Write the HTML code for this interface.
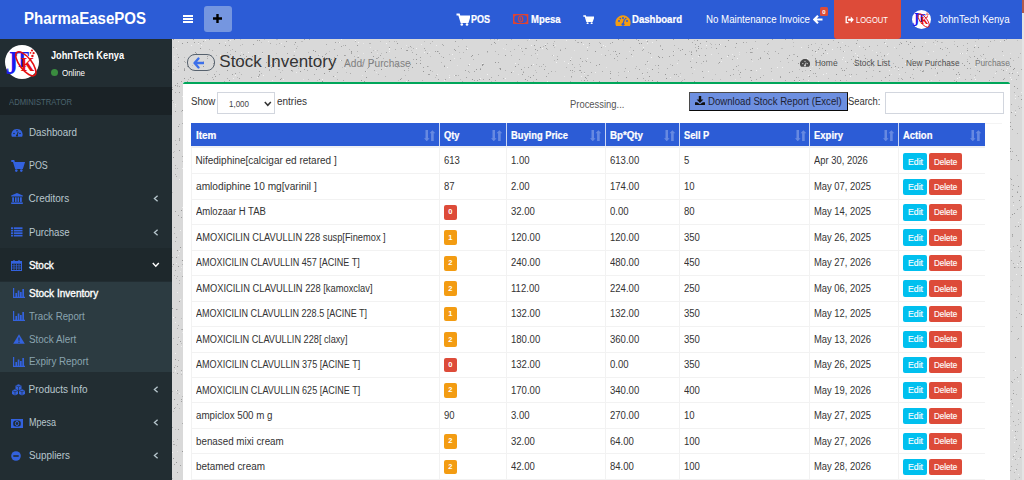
<!DOCTYPE html>
<html><head><meta charset="utf-8"><title>Stock Inventory</title>
<style>
html,body{margin:0;padding:0;width:1024px;height:480px;overflow:hidden;background:#d9d9d9;}
body{position:relative;font-family:"Liberation Sans", sans-serif;}
</style></head><body>
<div style="position:absolute;left:172px;top:38px;width:850px;height:442px;background:#d9d9d9;"></div>
<svg style="position:absolute;left:172px;top:38px;shape-rendering:crispEdges;" width="850" height="442" viewBox="0 0 850 442"><rect x="331" y="10" width="1" height="1" fill="#e8e8e8"/><rect x="666" y="4" width="1" height="1" fill="#a2a2a2"/><rect x="840" y="35" width="1" height="1" fill="#a2a2a2"/><rect x="374" y="38" width="1" height="1" fill="#a2a2a2"/><rect x="519" y="14" width="1" height="1" fill="#a2a2a2"/><rect x="88" y="28" width="1" height="1" fill="#e8e8e8"/><rect x="71" y="16" width="1" height="1" fill="#a2a2a2"/><rect x="564" y="28" width="1" height="1" fill="#a2a2a2"/><rect x="846" y="37" width="1" height="1" fill="#a2a2a2"/><rect x="228" y="41" width="1" height="1" fill="#989898"/><rect x="63" y="37" width="1" height="1" fill="#f4f4f4"/><rect x="406" y="4" width="1" height="1" fill="#acacac"/><rect x="47" y="36" width="1" height="1" fill="#acacac"/><rect x="296" y="27" width="1" height="1" fill="#acacac"/><rect x="553" y="8" width="1" height="1" fill="#989898"/><rect x="315" y="36" width="1" height="1" fill="#f4f4f4"/><rect x="185" y="7" width="1" height="1" fill="#989898"/><rect x="584" y="41" width="1" height="1" fill="#acacac"/><rect x="381" y="7" width="1" height="1" fill="#989898"/><rect x="729" y="5" width="1" height="1" fill="#989898"/><rect x="61" y="40" width="1" height="1" fill="#efefef"/><rect x="508" y="35" width="1" height="1" fill="#bebebe"/><rect x="795" y="21" width="1" height="1" fill="#bebebe"/><rect x="599" y="30" width="1" height="1" fill="#b6b6b6"/><rect x="306" y="16" width="1" height="1" fill="#acacac"/><rect x="715" y="16" width="1" height="1" fill="#efefef"/><rect x="588" y="20" width="1" height="1" fill="#989898"/><rect x="506" y="22" width="1" height="1" fill="#bebebe"/><rect x="294" y="39" width="1" height="1" fill="#a2a2a2"/><rect x="120" y="33" width="1" height="1" fill="#bebebe"/><rect x="168" y="22" width="1" height="1" fill="#efefef"/><rect x="500" y="27" width="1" height="1" fill="#a2a2a2"/><rect x="684" y="5" width="1" height="1" fill="#989898"/><rect x="586" y="21" width="1" height="1" fill="#b6b6b6"/><rect x="711" y="23" width="1" height="1" fill="#989898"/><rect x="508" y="38" width="1" height="1" fill="#e8e8e8"/><rect x="70" y="6" width="1" height="1" fill="#b6b6b6"/><rect x="485" y="43" width="1" height="1" fill="#a2a2a2"/><rect x="62" y="20" width="1" height="1" fill="#989898"/><rect x="697" y="29" width="1" height="1" fill="#b6b6b6"/><rect x="733" y="25" width="1" height="1" fill="#f4f4f4"/><rect x="355" y="2" width="1" height="1" fill="#bebebe"/><rect x="363" y="11" width="1" height="1" fill="#989898"/><rect x="119" y="32" width="1" height="1" fill="#a2a2a2"/><rect x="223" y="19" width="1" height="1" fill="#acacac"/><rect x="756" y="16" width="1" height="1" fill="#e8e8e8"/><rect x="400" y="32" width="1" height="1" fill="#a2a2a2"/><rect x="170" y="29" width="1" height="1" fill="#bebebe"/><rect x="562" y="18" width="1" height="1" fill="#acacac"/><rect x="838" y="28" width="1" height="1" fill="#989898"/><rect x="285" y="27" width="1" height="1" fill="#e8e8e8"/><rect x="699" y="25" width="1" height="1" fill="#acacac"/><rect x="154" y="6" width="1" height="1" fill="#acacac"/><rect x="154" y="15" width="1" height="1" fill="#acacac"/><rect x="12" y="32" width="1" height="1" fill="#989898"/><rect x="186" y="17" width="1" height="1" fill="#e8e8e8"/><rect x="4" y="10" width="1" height="1" fill="#bebebe"/><rect x="547" y="24" width="1" height="1" fill="#989898"/><rect x="579" y="21" width="1" height="1" fill="#acacac"/><rect x="707" y="33" width="1" height="1" fill="#989898"/><rect x="670" y="4" width="1" height="1" fill="#e8e8e8"/><rect x="798" y="36" width="1" height="1" fill="#bebebe"/><rect x="407" y="26" width="1" height="1" fill="#bebebe"/><rect x="106" y="31" width="1" height="1" fill="#bebebe"/><rect x="63" y="13" width="1" height="1" fill="#a2a2a2"/><rect x="213" y="29" width="1" height="1" fill="#efefef"/><rect x="112" y="22" width="1" height="1" fill="#989898"/><rect x="53" y="7" width="1" height="1" fill="#a2a2a2"/><rect x="580" y="10" width="1" height="1" fill="#989898"/><rect x="103" y="24" width="1" height="1" fill="#989898"/><rect x="26" y="5" width="1" height="1" fill="#efefef"/><rect x="628" y="25" width="1" height="1" fill="#acacac"/><rect x="649" y="17" width="1" height="1" fill="#b6b6b6"/><rect x="616" y="24" width="1" height="1" fill="#bebebe"/><rect x="125" y="8" width="1" height="1" fill="#bebebe"/><rect x="477" y="31" width="1" height="1" fill="#e8e8e8"/><rect x="319" y="6" width="1" height="1" fill="#acacac"/><rect x="104" y="22" width="1" height="1" fill="#b6b6b6"/><rect x="490" y="11" width="1" height="1" fill="#989898"/><rect x="23" y="14" width="1" height="1" fill="#989898"/><rect x="370" y="10" width="1" height="1" fill="#f4f4f4"/><rect x="556" y="2" width="1" height="1" fill="#989898"/><rect x="305" y="42" width="1" height="1" fill="#a2a2a2"/><rect x="712" y="17" width="1" height="1" fill="#989898"/><rect x="375" y="11" width="1" height="1" fill="#b6b6b6"/><rect x="790" y="15" width="1" height="1" fill="#f4f4f4"/><rect x="554" y="33" width="1" height="1" fill="#b6b6b6"/><rect x="651" y="15" width="1" height="1" fill="#989898"/><rect x="830" y="13" width="1" height="1" fill="#acacac"/><rect x="837" y="26" width="1" height="1" fill="#acacac"/><rect x="204" y="34" width="1" height="1" fill="#e8e8e8"/><rect x="364" y="2" width="1" height="1" fill="#a2a2a2"/><rect x="809" y="18" width="1" height="1" fill="#bebebe"/><rect x="265" y="13" width="1" height="1" fill="#989898"/><rect x="352" y="29" width="1" height="1" fill="#b6b6b6"/><rect x="373" y="6" width="1" height="1" fill="#efefef"/><rect x="104" y="15" width="1" height="1" fill="#bebebe"/><rect x="201" y="22" width="1" height="1" fill="#acacac"/><rect x="494" y="40" width="1" height="1" fill="#989898"/><rect x="1" y="31" width="1" height="1" fill="#b6b6b6"/><rect x="818" y="42" width="1" height="1" fill="#efefef"/><rect x="676" y="8" width="1" height="1" fill="#bebebe"/><rect x="801" y="13" width="1" height="1" fill="#bebebe"/><rect x="182" y="28" width="1" height="1" fill="#b6b6b6"/><rect x="88" y="26" width="1" height="1" fill="#bebebe"/><rect x="411" y="6" width="1" height="1" fill="#f4f4f4"/><rect x="162" y="11" width="1" height="1" fill="#acacac"/><rect x="28" y="10" width="1" height="1" fill="#989898"/><rect x="476" y="42" width="1" height="1" fill="#acacac"/><rect x="626" y="39" width="1" height="1" fill="#bebebe"/><rect x="673" y="23" width="1" height="1" fill="#efefef"/><rect x="561" y="36" width="1" height="1" fill="#acacac"/><rect x="21" y="1" width="1" height="1" fill="#a2a2a2"/><rect x="539" y="9" width="1" height="1" fill="#bebebe"/><rect x="199" y="14" width="1" height="1" fill="#a2a2a2"/><rect x="257" y="14" width="1" height="1" fill="#e8e8e8"/><rect x="513" y="16" width="1" height="1" fill="#989898"/><rect x="333" y="17" width="1" height="1" fill="#989898"/><rect x="429" y="9" width="1" height="1" fill="#a2a2a2"/><rect x="757" y="23" width="1" height="1" fill="#bebebe"/><rect x="678" y="38" width="1" height="1" fill="#f4f4f4"/><rect x="430" y="33" width="1" height="1" fill="#acacac"/><rect x="544" y="10" width="1" height="1" fill="#989898"/><rect x="522" y="2" width="1" height="1" fill="#bebebe"/><rect x="795" y="12" width="1" height="1" fill="#989898"/><rect x="4" y="10" width="1" height="1" fill="#efefef"/><rect x="144" y="31" width="1" height="1" fill="#989898"/><rect x="742" y="8" width="1" height="1" fill="#989898"/><rect x="63" y="21" width="1" height="1" fill="#989898"/><rect x="543" y="36" width="1" height="1" fill="#bebebe"/><rect x="803" y="7" width="1" height="1" fill="#f4f4f4"/><rect x="58" y="16" width="1" height="1" fill="#acacac"/><rect x="283" y="3" width="1" height="1" fill="#a2a2a2"/><rect x="519" y="29" width="1" height="1" fill="#989898"/><rect x="28" y="5" width="1" height="1" fill="#bebebe"/><rect x="333" y="40" width="1" height="1" fill="#f4f4f4"/><rect x="620" y="33" width="1" height="1" fill="#acacac"/><rect x="709" y="18" width="1" height="1" fill="#bebebe"/><rect x="520" y="35" width="1" height="1" fill="#bebebe"/><rect x="519" y="16" width="1" height="1" fill="#989898"/><rect x="265" y="36" width="1" height="1" fill="#efefef"/><rect x="458" y="9" width="1" height="1" fill="#bebebe"/><rect x="124" y="26" width="1" height="1" fill="#bebebe"/><rect x="323" y="5" width="1" height="1" fill="#acacac"/><rect x="438" y="5" width="1" height="1" fill="#acacac"/><rect x="685" y="20" width="1" height="1" fill="#efefef"/><rect x="795" y="10" width="1" height="1" fill="#b6b6b6"/><rect x="146" y="17" width="1" height="1" fill="#acacac"/><rect x="478" y="15" width="1" height="1" fill="#a2a2a2"/><rect x="407" y="32" width="1" height="1" fill="#acacac"/><rect x="683" y="15" width="1" height="1" fill="#efefef"/><rect x="723" y="28" width="1" height="1" fill="#989898"/><rect x="413" y="22" width="1" height="1" fill="#bebebe"/><rect x="200" y="23" width="1" height="1" fill="#b6b6b6"/><rect x="94" y="24" width="1" height="1" fill="#a2a2a2"/><rect x="346" y="36" width="1" height="1" fill="#e8e8e8"/><rect x="451" y="2" width="1" height="1" fill="#bebebe"/><rect x="339" y="34" width="1" height="1" fill="#989898"/><rect x="302" y="33" width="1" height="1" fill="#a2a2a2"/><rect x="115" y="15" width="1" height="1" fill="#a2a2a2"/><rect x="86" y="17" width="1" height="1" fill="#e8e8e8"/><rect x="40" y="12" width="1" height="1" fill="#b6b6b6"/><rect x="773" y="9" width="1" height="1" fill="#bebebe"/><rect x="692" y="17" width="1" height="1" fill="#bebebe"/><rect x="152" y="35" width="1" height="1" fill="#989898"/><rect x="584" y="32" width="1" height="1" fill="#f4f4f4"/><rect x="334" y="6" width="1" height="1" fill="#b6b6b6"/><rect x="58" y="12" width="1" height="1" fill="#bebebe"/><rect x="74" y="18" width="1" height="1" fill="#a2a2a2"/><rect x="649" y="6" width="1" height="1" fill="#b6b6b6"/><rect x="85" y="39" width="1" height="1" fill="#efefef"/><rect x="68" y="17" width="1" height="1" fill="#a2a2a2"/><rect x="464" y="1" width="1" height="1" fill="#b6b6b6"/><rect x="566" y="27" width="1" height="1" fill="#b6b6b6"/><rect x="636" y="9" width="1" height="1" fill="#a2a2a2"/><rect x="539" y="16" width="1" height="1" fill="#efefef"/><rect x="165" y="17" width="1" height="1" fill="#a2a2a2"/><rect x="185" y="13" width="1" height="1" fill="#b6b6b6"/><rect x="643" y="20" width="1" height="1" fill="#989898"/><rect x="777" y="14" width="1" height="1" fill="#b6b6b6"/><rect x="456" y="33" width="1" height="1" fill="#f4f4f4"/><rect x="182" y="18" width="1" height="1" fill="#b6b6b6"/><rect x="822" y="2" width="1" height="1" fill="#b6b6b6"/><rect x="37" y="1" width="1" height="1" fill="#a2a2a2"/><rect x="750" y="33" width="1" height="1" fill="#989898"/><rect x="194" y="33" width="1" height="1" fill="#e8e8e8"/><rect x="251" y="29" width="1" height="1" fill="#a2a2a2"/><rect x="674" y="42" width="1" height="1" fill="#bebebe"/><rect x="672" y="32" width="1" height="1" fill="#989898"/><rect x="402" y="33" width="1" height="1" fill="#b6b6b6"/><rect x="704" y="14" width="1" height="1" fill="#efefef"/><rect x="350" y="13" width="1" height="1" fill="#acacac"/><rect x="414" y="23" width="1" height="1" fill="#a2a2a2"/><rect x="132" y="1" width="1" height="1" fill="#a2a2a2"/><rect x="640" y="17" width="1" height="1" fill="#bebebe"/><rect x="167" y="4" width="1" height="1" fill="#efefef"/><rect x="681" y="25" width="1" height="1" fill="#989898"/><rect x="686" y="19" width="1" height="1" fill="#989898"/><rect x="248" y="19" width="1" height="1" fill="#a2a2a2"/><rect x="470" y="12" width="1" height="1" fill="#acacac"/><rect x="275" y="29" width="1" height="1" fill="#efefef"/><rect x="269" y="24" width="1" height="1" fill="#b6b6b6"/><rect x="560" y="21" width="1" height="1" fill="#acacac"/><rect x="35" y="20" width="1" height="1" fill="#acacac"/><rect x="365" y="12" width="1" height="1" fill="#a2a2a2"/><rect x="343" y="25" width="1" height="1" fill="#efefef"/><rect x="486" y="18" width="1" height="1" fill="#989898"/><rect x="671" y="13" width="1" height="1" fill="#acacac"/><rect x="516" y="1" width="1" height="1" fill="#a2a2a2"/><rect x="270" y="6" width="1" height="1" fill="#acacac"/><rect x="409" y="38" width="1" height="1" fill="#efefef"/><rect x="403" y="2" width="1" height="1" fill="#b6b6b6"/><rect x="311" y="41" width="1" height="1" fill="#acacac"/><rect x="86" y="38" width="1" height="1" fill="#989898"/><rect x="768" y="10" width="1" height="1" fill="#989898"/><rect x="398" y="21" width="1" height="1" fill="#f4f4f4"/><rect x="506" y="10" width="1" height="1" fill="#b6b6b6"/><rect x="741" y="40" width="1" height="1" fill="#acacac"/><rect x="44" y="33" width="1" height="1" fill="#bebebe"/><rect x="751" y="33" width="1" height="1" fill="#acacac"/><rect x="536" y="33" width="1" height="1" fill="#f4f4f4"/><rect x="832" y="2" width="1" height="1" fill="#989898"/><rect x="817" y="42" width="1" height="1" fill="#acacac"/><rect x="87" y="2" width="1" height="1" fill="#a2a2a2"/><rect x="136" y="41" width="1" height="1" fill="#b6b6b6"/><rect x="107" y="25" width="1" height="1" fill="#e8e8e8"/><rect x="571" y="4" width="1" height="1" fill="#a2a2a2"/><rect x="641" y="35" width="1" height="1" fill="#acacac"/><rect x="501" y="17" width="1" height="1" fill="#a2a2a2"/><rect x="467" y="5" width="1" height="1" fill="#989898"/><rect x="548" y="6" width="1" height="1" fill="#f4f4f4"/><rect x="538" y="5" width="1" height="1" fill="#bebebe"/><rect x="258" y="5" width="1" height="1" fill="#b6b6b6"/><rect x="240" y="14" width="1" height="1" fill="#acacac"/><rect x="757" y="42" width="1" height="1" fill="#bebebe"/><rect x="505" y="25" width="1" height="1" fill="#efefef"/><rect x="490" y="19" width="1" height="1" fill="#a2a2a2"/><rect x="631" y="41" width="1" height="1" fill="#acacac"/><rect x="79" y="39" width="1" height="1" fill="#acacac"/><rect x="339" y="17" width="1" height="1" fill="#b6b6b6"/><rect x="636" y="37" width="1" height="1" fill="#efefef"/><rect x="12" y="31" width="1" height="1" fill="#a2a2a2"/><rect x="497" y="18" width="1" height="1" fill="#a2a2a2"/><rect x="708" y="14" width="1" height="1" fill="#bebebe"/><rect x="297" y="34" width="1" height="1" fill="#b6b6b6"/><rect x="475" y="30" width="1" height="1" fill="#e8e8e8"/><rect x="785" y="8" width="1" height="1" fill="#989898"/><rect x="204" y="20" width="1" height="1" fill="#a2a2a2"/><rect x="484" y="2" width="1" height="1" fill="#b6b6b6"/><rect x="469" y="5" width="1" height="1" fill="#989898"/><rect x="460" y="18" width="1" height="1" fill="#e8e8e8"/><rect x="214" y="14" width="1" height="1" fill="#a2a2a2"/><rect x="595" y="6" width="1" height="1" fill="#acacac"/><rect x="765" y="34" width="1" height="1" fill="#b6b6b6"/><rect x="368" y="9" width="1" height="1" fill="#989898"/><rect x="839" y="41" width="1" height="1" fill="#f4f4f4"/><rect x="286" y="8" width="1" height="1" fill="#b6b6b6"/><rect x="236" y="32" width="1" height="1" fill="#bebebe"/><rect x="403" y="2" width="1" height="1" fill="#acacac"/><rect x="3" y="32" width="1" height="1" fill="#bebebe"/><rect x="415" y="20" width="1" height="1" fill="#f4f4f4"/><rect x="144" y="27" width="1" height="1" fill="#b6b6b6"/><rect x="385" y="21" width="1" height="1" fill="#a2a2a2"/><rect x="339" y="1" width="1" height="1" fill="#b6b6b6"/><rect x="768" y="22" width="1" height="1" fill="#bebebe"/><rect x="122" y="13" width="1" height="1" fill="#f4f4f4"/><rect x="12" y="19" width="1" height="1" fill="#b6b6b6"/><rect x="381" y="5" width="1" height="1" fill="#bebebe"/><rect x="399" y="38" width="1" height="1" fill="#a2a2a2"/><rect x="369" y="28" width="1" height="1" fill="#b6b6b6"/><rect x="49" y="18" width="1" height="1" fill="#efefef"/><rect x="52" y="43" width="1" height="1" fill="#b6b6b6"/><rect x="650" y="10" width="1" height="1" fill="#acacac"/><rect x="272" y="28" width="1" height="1" fill="#989898"/><rect x="323" y="13" width="1" height="1" fill="#b6b6b6"/><rect x="803" y="28" width="1" height="1" fill="#efefef"/><rect x="831" y="41" width="1" height="1" fill="#bebebe"/><rect x="567" y="36" width="1" height="1" fill="#acacac"/><rect x="736" y="6" width="1" height="1" fill="#a2a2a2"/><rect x="749" y="27" width="1" height="1" fill="#bebebe"/><rect x="629" y="9" width="1" height="1" fill="#f4f4f4"/><rect x="293" y="32" width="1" height="1" fill="#a2a2a2"/><rect x="563" y="9" width="1" height="1" fill="#acacac"/><rect x="483" y="27" width="1" height="1" fill="#b6b6b6"/><rect x="288" y="20" width="1" height="1" fill="#b6b6b6"/><rect x="756" y="42" width="1" height="1" fill="#e8e8e8"/><rect x="415" y="42" width="1" height="1" fill="#acacac"/><rect x="308" y="31" width="1" height="1" fill="#989898"/><rect x="684" y="26" width="1" height="1" fill="#a2a2a2"/><rect x="171" y="42" width="1" height="1" fill="#acacac"/><rect x="76" y="14" width="1" height="1" fill="#f4f4f4"/><rect x="831" y="32" width="1" height="1" fill="#989898"/><rect x="225" y="29" width="1" height="1" fill="#b6b6b6"/><rect x="777" y="29" width="1" height="1" fill="#bebebe"/><rect x="142" y="36" width="1" height="1" fill="#acacac"/><rect x="249" y="6" width="1" height="1" fill="#efefef"/><rect x="350" y="36" width="1" height="1" fill="#a2a2a2"/><rect x="326" y="16" width="1" height="1" fill="#b6b6b6"/><rect x="264" y="37" width="1" height="1" fill="#acacac"/><rect x="20" y="27" width="1" height="1" fill="#bebebe"/><rect x="423" y="34" width="1" height="1" fill="#efefef"/><rect x="385" y="18" width="1" height="1" fill="#b6b6b6"/><rect x="770" y="4" width="1" height="1" fill="#bebebe"/><rect x="284" y="37" width="1" height="1" fill="#b6b6b6"/><rect x="128" y="33" width="1" height="1" fill="#989898"/><rect x="644" y="14" width="1" height="1" fill="#efefef"/><rect x="277" y="16" width="1" height="1" fill="#bebebe"/><rect x="409" y="42" width="1" height="1" fill="#bebebe"/><rect x="442" y="20" width="1" height="1" fill="#a2a2a2"/><rect x="130" y="3" width="1" height="1" fill="#bebebe"/><rect x="726" y="31" width="1" height="1" fill="#f4f4f4"/><rect x="501" y="1" width="1" height="1" fill="#a2a2a2"/><rect x="400" y="34" width="1" height="1" fill="#bebebe"/><rect x="459" y="16" width="1" height="1" fill="#a2a2a2"/><rect x="229" y="10" width="1" height="1" fill="#acacac"/><rect x="534" y="7" width="1" height="1" fill="#f4f4f4"/><rect x="717" y="42" width="1" height="1" fill="#bebebe"/><rect x="87" y="36" width="1" height="1" fill="#a2a2a2"/><rect x="1" y="9" width="1" height="1" fill="#acacac"/><rect x="583" y="3" width="1" height="1" fill="#b6b6b6"/><rect x="131" y="41" width="1" height="1" fill="#e8e8e8"/><rect x="540" y="41" width="1" height="1" fill="#bebebe"/><rect x="715" y="8" width="1" height="1" fill="#a2a2a2"/><rect x="72" y="20" width="1" height="1" fill="#989898"/><rect x="596" y="13" width="1" height="1" fill="#bebebe"/><rect x="267" y="15" width="1" height="1" fill="#f4f4f4"/><rect x="1" y="1" width="1" height="1" fill="#989898"/><rect x="308" y="30" width="1" height="1" fill="#b6b6b6"/><rect x="323" y="42" width="1" height="1" fill="#acacac"/><rect x="486" y="34" width="1" height="1" fill="#acacac"/><rect x="560" y="16" width="1" height="1" fill="#efefef"/><rect x="421" y="42" width="1" height="1" fill="#b6b6b6"/><rect x="56" y="2" width="1" height="1" fill="#acacac"/><rect x="510" y="42" width="1" height="1" fill="#bebebe"/><rect x="83" y="17" width="1" height="1" fill="#acacac"/><rect x="683" y="28" width="1" height="1" fill="#e8e8e8"/><rect x="232" y="32" width="1" height="1" fill="#a2a2a2"/><rect x="712" y="22" width="1" height="1" fill="#bebebe"/><rect x="371" y="26" width="1" height="1" fill="#acacac"/><rect x="6" y="19" width="1" height="1" fill="#989898"/><rect x="69" y="14" width="1" height="1" fill="#e8e8e8"/><rect x="205" y="20" width="1" height="1" fill="#acacac"/><rect x="236" y="30" width="1" height="1" fill="#acacac"/><rect x="271" y="19" width="1" height="1" fill="#a2a2a2"/><rect x="638" y="32" width="1" height="1" fill="#989898"/><rect x="191" y="15" width="1" height="1" fill="#e8e8e8"/><rect x="427" y="43" width="1" height="1" fill="#a2a2a2"/><rect x="609" y="10" width="1" height="1" fill="#bebebe"/><rect x="55" y="14" width="1" height="1" fill="#a2a2a2"/><rect x="610" y="10" width="1" height="1" fill="#bebebe"/><rect x="53" y="4" width="1" height="1" fill="#efefef"/><rect x="402" y="29" width="1" height="1" fill="#b6b6b6"/><rect x="750" y="8" width="1" height="1" fill="#a2a2a2"/><rect x="169" y="22" width="1" height="1" fill="#acacac"/><rect x="189" y="42" width="1" height="1" fill="#989898"/><rect x="764" y="30" width="1" height="1" fill="#efefef"/><rect x="319" y="43" width="1" height="1" fill="#bebebe"/><rect x="382" y="22" width="1" height="1" fill="#bebebe"/><rect x="173" y="7" width="1" height="1" fill="#a2a2a2"/><rect x="80" y="18" width="1" height="1" fill="#a2a2a2"/><rect x="359" y="27" width="1" height="1" fill="#efefef"/><rect x="574" y="14" width="1" height="1" fill="#bebebe"/><rect x="365" y="20" width="1" height="1" fill="#bebebe"/><rect x="89" y="4" width="1" height="1" fill="#bebebe"/><rect x="200" y="24" width="1" height="1" fill="#989898"/><rect x="457" y="13" width="1" height="1" fill="#e8e8e8"/><rect x="372" y="31" width="1" height="1" fill="#a2a2a2"/><rect x="646" y="27" width="1" height="1" fill="#acacac"/><rect x="831" y="41" width="1" height="1" fill="#bebebe"/><rect x="41" y="25" width="1" height="1" fill="#a2a2a2"/><rect x="475" y="5" width="1" height="1" fill="#efefef"/><rect x="263" y="13" width="1" height="1" fill="#a2a2a2"/><rect x="620" y="22" width="1" height="1" fill="#b6b6b6"/><rect x="278" y="22" width="1" height="1" fill="#989898"/><rect x="44" y="17" width="1" height="1" fill="#b6b6b6"/><rect x="282" y="20" width="1" height="1" fill="#efefef"/><rect x="738" y="39" width="1" height="1" fill="#a2a2a2"/><rect x="24" y="15" width="1" height="1" fill="#a2a2a2"/><rect x="486" y="30" width="1" height="1" fill="#bebebe"/><rect x="808" y="17" width="1" height="1" fill="#bebebe"/><rect x="834" y="32" width="1" height="1" fill="#efefef"/><rect x="508" y="12" width="1" height="1" fill="#a2a2a2"/><rect x="821" y="20" width="1" height="1" fill="#acacac"/><rect x="621" y="16" width="1" height="1" fill="#b6b6b6"/><rect x="327" y="30" width="1" height="1" fill="#b6b6b6"/><rect x="802" y="39" width="1" height="1" fill="#efefef"/><rect x="524" y="13" width="1" height="1" fill="#bebebe"/><rect x="770" y="11" width="1" height="1" fill="#acacac"/><rect x="417" y="5" width="1" height="1" fill="#a2a2a2"/><rect x="493" y="36" width="1" height="1" fill="#989898"/><rect x="333" y="11" width="1" height="1" fill="#e8e8e8"/><rect x="107" y="5" width="1" height="1" fill="#b6b6b6"/><rect x="639" y="6" width="1" height="1" fill="#acacac"/><rect x="98" y="27" width="1" height="1" fill="#bebebe"/><rect x="726" y="29" width="1" height="1" fill="#acacac"/><rect x="239" y="9" width="1" height="1" fill="#e8e8e8"/><rect x="471" y="40" width="1" height="1" fill="#acacac"/><rect x="765" y="35" width="1" height="1" fill="#a2a2a2"/><rect x="798" y="19" width="1" height="1" fill="#b6b6b6"/><rect x="286" y="37" width="1" height="1" fill="#b6b6b6"/><rect x="381" y="17" width="1" height="1" fill="#f4f4f4"/><rect x="266" y="13" width="1" height="1" fill="#bebebe"/><rect x="253" y="12" width="1" height="1" fill="#acacac"/><rect x="241" y="10" width="1" height="1" fill="#b6b6b6"/><rect x="592" y="13" width="1" height="1" fill="#b6b6b6"/><rect x="66" y="26" width="1" height="1" fill="#e8e8e8"/><rect x="251" y="33" width="1" height="1" fill="#989898"/><rect x="236" y="42" width="1" height="1" fill="#a2a2a2"/><rect x="669" y="30" width="1" height="1" fill="#a2a2a2"/><rect x="104" y="1" width="1" height="1" fill="#bebebe"/><rect x="838" y="15" width="1" height="1" fill="#e8e8e8"/><rect x="382" y="3" width="1" height="1" fill="#b6b6b6"/><rect x="238" y="8" width="1" height="1" fill="#a2a2a2"/><rect x="194" y="39" width="1" height="1" fill="#989898"/><rect x="198" y="5" width="1" height="1" fill="#b6b6b6"/><rect x="524" y="12" width="1" height="1" fill="#e8e8e8"/><rect x="617" y="17" width="1" height="1" fill="#a2a2a2"/><rect x="108" y="41" width="1" height="1" fill="#989898"/><rect x="726" y="40" width="1" height="1" fill="#b6b6b6"/><rect x="222" y="3" width="1" height="1" fill="#b6b6b6"/><rect x="348" y="10" width="1" height="1" fill="#efefef"/><rect x="208" y="17" width="1" height="1" fill="#a2a2a2"/><rect x="613" y="42" width="1" height="1" fill="#acacac"/><rect x="834" y="1" width="1" height="1" fill="#b6b6b6"/><rect x="418" y="24" width="1" height="1" fill="#acacac"/><rect x="635" y="20" width="1" height="1" fill="#efefef"/><rect x="208" y="3" width="1" height="1" fill="#bebebe"/><rect x="561" y="31" width="1" height="1" fill="#a2a2a2"/><rect x="417" y="7" width="1" height="1" fill="#bebebe"/><rect x="679" y="36" width="1" height="1" fill="#acacac"/><rect x="654" y="35" width="1" height="1" fill="#efefef"/><rect x="668" y="11" width="1" height="1" fill="#bebebe"/><rect x="712" y="18" width="1" height="1" fill="#bebebe"/><rect x="290" y="43" width="1" height="1" fill="#b6b6b6"/><rect x="427" y="4" width="1" height="1" fill="#b6b6b6"/><rect x="763" y="37" width="1" height="1" fill="#e8e8e8"/><rect x="424" y="27" width="1" height="1" fill="#a2a2a2"/><rect x="785" y="24" width="1" height="1" fill="#acacac"/><rect x="400" y="26" width="1" height="1" fill="#acacac"/><rect x="6" y="28" width="1" height="1" fill="#acacac"/><rect x="433" y="8" width="1" height="1" fill="#efefef"/><rect x="415" y="37" width="1" height="1" fill="#b6b6b6"/><rect x="471" y="11" width="1" height="1" fill="#acacac"/><rect x="15" y="4" width="1" height="1" fill="#989898"/><rect x="145" y="42" width="1" height="1" fill="#bebebe"/><rect x="91" y="37" width="1" height="1" fill="#f4f4f4"/><rect x="379" y="33" width="1" height="1" fill="#acacac"/><rect x="149" y="23" width="1" height="1" fill="#b6b6b6"/><rect x="165" y="34" width="1" height="1" fill="#acacac"/><rect x="68" y="7" width="1" height="1" fill="#bebebe"/><rect x="502" y="13" width="1" height="1" fill="#e8e8e8"/><rect x="129" y="3" width="1" height="1" fill="#bebebe"/><rect x="322" y="4" width="1" height="1" fill="#989898"/><rect x="651" y="25" width="1" height="1" fill="#a2a2a2"/><rect x="729" y="40" width="1" height="1" fill="#acacac"/><rect x="655" y="15" width="1" height="1" fill="#f4f4f4"/><rect x="414" y="40" width="1" height="1" fill="#acacac"/><rect x="849" y="31" width="1" height="1" fill="#acacac"/><rect x="578" y="14" width="1" height="1" fill="#a2a2a2"/><rect x="409" y="34" width="1" height="1" fill="#acacac"/><rect x="392" y="23" width="1" height="1" fill="#efefef"/><rect x="153" y="16" width="1" height="1" fill="#acacac"/><rect x="42" y="36" width="1" height="1" fill="#a2a2a2"/><rect x="683" y="21" width="1" height="1" fill="#a2a2a2"/><rect x="399" y="39" width="1" height="1" fill="#bebebe"/><rect x="563" y="41" width="1" height="1" fill="#e8e8e8"/><rect x="664" y="27" width="1" height="1" fill="#b6b6b6"/><rect x="596" y="16" width="1" height="1" fill="#bebebe"/><rect x="398" y="43" width="1" height="1" fill="#b6b6b6"/><rect x="457" y="33" width="1" height="1" fill="#bebebe"/><rect x="183" y="2" width="1" height="1" fill="#efefef"/><rect x="633" y="32" width="1" height="1" fill="#bebebe"/><rect x="240" y="29" width="1" height="1" fill="#989898"/><rect x="798" y="30" width="1" height="1" fill="#acacac"/><rect x="829" y="31" width="1" height="1" fill="#bebebe"/><rect x="109" y="5" width="1" height="1" fill="#efefef"/><rect x="367" y="28" width="1" height="1" fill="#b6b6b6"/><rect x="93" y="29" width="1" height="1" fill="#989898"/><rect x="522" y="43" width="1" height="1" fill="#a2a2a2"/><rect x="41" y="41" width="1" height="1" fill="#acacac"/><rect x="84" y="21" width="1" height="1" fill="#f4f4f4"/><rect x="523" y="6" width="1" height="1" fill="#a2a2a2"/><rect x="770" y="33" width="1" height="1" fill="#bebebe"/><rect x="668" y="9" width="1" height="1" fill="#a2a2a2"/><rect x="67" y="40" width="1" height="1" fill="#a2a2a2"/><rect x="198" y="9" width="1" height="1" fill="#e8e8e8"/><rect x="294" y="11" width="1" height="1" fill="#acacac"/><rect x="67" y="23" width="1" height="1" fill="#989898"/><rect x="774" y="17" width="1" height="1" fill="#acacac"/><rect x="331" y="40" width="1" height="1" fill="#b6b6b6"/><rect x="835" y="30" width="1" height="1" fill="#efefef"/><rect x="260" y="33" width="1" height="1" fill="#bebebe"/><rect x="213" y="38" width="1" height="1" fill="#b6b6b6"/><rect x="630" y="33" width="1" height="1" fill="#acacac"/><rect x="326" y="24" width="1" height="1" fill="#a2a2a2"/><rect x="203" y="12" width="1" height="1" fill="#e8e8e8"/><rect x="165" y="41" width="1" height="1" fill="#b6b6b6"/><rect x="695" y="21" width="1" height="1" fill="#bebebe"/><rect x="172" y="17" width="1" height="1" fill="#a2a2a2"/><rect x="786" y="34" width="1" height="1" fill="#a2a2a2"/><rect x="651" y="24" width="1" height="1" fill="#e8e8e8"/><rect x="568" y="34" width="1" height="1" fill="#989898"/><rect x="705" y="7" width="1" height="1" fill="#b6b6b6"/><rect x="548" y="41" width="1" height="1" fill="#bebebe"/><rect x="755" y="24" width="1" height="1" fill="#b6b6b6"/><rect x="384" y="24" width="1" height="1" fill="#f4f4f4"/><rect x="149" y="24" width="1" height="1" fill="#b6b6b6"/><rect x="782" y="6" width="1" height="1" fill="#bebebe"/><rect x="235" y="12" width="1" height="1" fill="#989898"/><rect x="761" y="4" width="1" height="1" fill="#b6b6b6"/><rect x="839" y="34" width="1" height="1" fill="#e8e8e8"/><rect x="317" y="41" width="1" height="1" fill="#989898"/><rect x="679" y="21" width="1" height="1" fill="#a2a2a2"/><rect x="765" y="3" width="1" height="1" fill="#acacac"/><rect x="152" y="19" width="1" height="1" fill="#989898"/><rect x="640" y="28" width="1" height="1" fill="#e8e8e8"/><rect x="524" y="24" width="1" height="1" fill="#a2a2a2"/><rect x="135" y="32" width="1" height="1" fill="#acacac"/><rect x="627" y="42" width="1" height="1" fill="#a2a2a2"/><rect x="22" y="4" width="1" height="1" fill="#a2a2a2"/><rect x="580" y="23" width="1" height="1" fill="#e8e8e8"/><rect x="108" y="34" width="1" height="1" fill="#b6b6b6"/><rect x="546" y="15" width="1" height="1" fill="#bebebe"/><rect x="597" y="20" width="1" height="1" fill="#989898"/><rect x="136" y="14" width="1" height="1" fill="#b6b6b6"/><rect x="638" y="31" width="1" height="1" fill="#efefef"/><rect x="137" y="1" width="1" height="1" fill="#acacac"/><rect x="724" y="10" width="1" height="1" fill="#bebebe"/><rect x="98" y="5" width="1" height="1" fill="#acacac"/><rect x="681" y="18" width="1" height="1" fill="#bebebe"/><rect x="831" y="17" width="1" height="1" fill="#efefef"/><rect x="57" y="42" width="1" height="1" fill="#989898"/><rect x="358" y="39" width="1" height="1" fill="#989898"/><rect x="454" y="39" width="1" height="1" fill="#989898"/><rect x="751" y="32" width="1" height="1" fill="#acacac"/><rect x="169" y="1" width="1" height="1" fill="#efefef"/><rect x="63" y="35" width="1" height="1" fill="#a2a2a2"/><rect x="415" y="12" width="1" height="1" fill="#acacac"/><rect x="163" y="4" width="1" height="1" fill="#a2a2a2"/><rect x="12" y="40" width="1" height="1" fill="#989898"/><rect x="672" y="13" width="1" height="1" fill="#efefef"/><rect x="423" y="13" width="1" height="1" fill="#989898"/><rect x="622" y="42" width="1" height="1" fill="#989898"/><rect x="663" y="42" width="1" height="1" fill="#bebebe"/><rect x="832" y="40" width="1" height="1" fill="#acacac"/><rect x="520" y="20" width="1" height="1" fill="#efefef"/><rect x="307" y="41" width="1" height="1" fill="#a2a2a2"/><rect x="741" y="31" width="1" height="1" fill="#989898"/><rect x="6" y="25" width="1" height="1" fill="#bebebe"/><rect x="763" y="30" width="1" height="1" fill="#a2a2a2"/><rect x="759" y="42" width="1" height="1" fill="#e8e8e8"/><rect x="179" y="15" width="1" height="1" fill="#a2a2a2"/><rect x="267" y="15" width="1" height="1" fill="#a2a2a2"/><rect x="126" y="22" width="1" height="1" fill="#b6b6b6"/><rect x="728" y="4" width="1" height="1" fill="#b6b6b6"/><rect x="651" y="36" width="1" height="1" fill="#f4f4f4"/><rect x="446" y="34" width="1" height="1" fill="#b6b6b6"/><rect x="302" y="42" width="1" height="1" fill="#acacac"/><rect x="87" y="33" width="1" height="1" fill="#a2a2a2"/><rect x="173" y="17" width="1" height="1" fill="#acacac"/><rect x="761" y="13" width="1" height="1" fill="#efefef"/><rect x="764" y="21" width="1" height="1" fill="#acacac"/><rect x="398" y="22" width="1" height="1" fill="#989898"/><rect x="244" y="25" width="1" height="1" fill="#989898"/><rect x="480" y="31" width="1" height="1" fill="#989898"/><rect x="714" y="1" width="1" height="1" fill="#efefef"/><rect x="447" y="15" width="1" height="1" fill="#989898"/><rect x="315" y="14" width="1" height="1" fill="#bebebe"/><rect x="637" y="38" width="1" height="1" fill="#a2a2a2"/><rect x="578" y="11" width="1" height="1" fill="#acacac"/><rect x="33" y="2" width="1" height="1" fill="#efefef"/><rect x="109" y="40" width="1" height="1" fill="#acacac"/><rect x="353" y="10" width="1" height="1" fill="#a2a2a2"/><rect x="31" y="3" width="1" height="1" fill="#acacac"/><rect x="709" y="42" width="1" height="1" fill="#a2a2a2"/><rect x="713" y="5" width="1" height="1" fill="#f4f4f4"/><rect x="47" y="5" width="1" height="1" fill="#989898"/><rect x="780" y="24" width="1" height="1" fill="#acacac"/><rect x="837" y="35" width="1" height="1" fill="#a2a2a2"/><rect x="773" y="25" width="1" height="1" fill="#a2a2a2"/><rect x="252" y="14" width="1" height="1" fill="#efefef"/><rect x="114" y="3" width="1" height="1" fill="#a2a2a2"/><rect x="831" y="41" width="1" height="1" fill="#a2a2a2"/><rect x="844" y="41" width="1" height="1" fill="#b6b6b6"/><rect x="488" y="7" width="1" height="1" fill="#acacac"/><rect x="100" y="42" width="1" height="1" fill="#efefef"/><rect x="301" y="21" width="1" height="1" fill="#b6b6b6"/><rect x="433" y="17" width="1" height="1" fill="#a2a2a2"/><rect x="359" y="17" width="1" height="1" fill="#b6b6b6"/><rect x="49" y="24" width="1" height="1" fill="#b6b6b6"/><rect x="787" y="39" width="1" height="1" fill="#f4f4f4"/><rect x="487" y="19" width="1" height="1" fill="#989898"/><rect x="763" y="2" width="1" height="1" fill="#bebebe"/><rect x="31" y="28" width="1" height="1" fill="#989898"/><rect x="791" y="7" width="1" height="1" fill="#b6b6b6"/><rect x="480" y="4" width="1" height="1" fill="#f4f4f4"/><rect x="579" y="14" width="1" height="1" fill="#a2a2a2"/><rect x="588" y="19" width="1" height="1" fill="#acacac"/><rect x="446" y="1" width="1" height="1" fill="#989898"/><rect x="206" y="19" width="1" height="1" fill="#a2a2a2"/><rect x="4" y="23" width="1" height="1" fill="#e8e8e8"/><rect x="97" y="32" width="1" height="1" fill="#acacac"/><rect x="506" y="38" width="1" height="1" fill="#b6b6b6"/><rect x="527" y="17" width="1" height="1" fill="#989898"/><rect x="162" y="19" width="1" height="1" fill="#acacac"/><rect x="716" y="15" width="1" height="1" fill="#e8e8e8"/><rect x="169" y="8" width="1" height="1" fill="#a2a2a2"/><rect x="502" y="36" width="1" height="1" fill="#a2a2a2"/><rect x="643" y="21" width="1" height="1" fill="#b6b6b6"/><rect x="97" y="26" width="1" height="1" fill="#bebebe"/><rect x="763" y="6" width="1" height="1" fill="#e8e8e8"/><rect x="661" y="2" width="1" height="1" fill="#b6b6b6"/><rect x="211" y="20" width="1" height="1" fill="#b6b6b6"/><rect x="438" y="35" width="1" height="1" fill="#989898"/><rect x="175" y="25" width="1" height="1" fill="#acacac"/><rect x="471" y="9" width="1" height="1" fill="#f4f4f4"/><rect x="608" y="39" width="1" height="1" fill="#a2a2a2"/><rect x="356" y="38" width="1" height="1" fill="#b6b6b6"/><rect x="534" y="10" width="1" height="1" fill="#bebebe"/><rect x="677" y="36" width="1" height="1" fill="#b6b6b6"/><rect x="173" y="30" width="1" height="1" fill="#e8e8e8"/><rect x="705" y="17" width="1" height="1" fill="#989898"/><rect x="236" y="9" width="1" height="1" fill="#b6b6b6"/><rect x="473" y="42" width="1" height="1" fill="#acacac"/><rect x="519" y="13" width="1" height="1" fill="#b6b6b6"/><rect x="308" y="40" width="1" height="1" fill="#efefef"/><rect x="740" y="10" width="1" height="1" fill="#acacac"/><rect x="740" y="21" width="1" height="1" fill="#989898"/><rect x="534" y="23" width="1" height="1" fill="#acacac"/><rect x="241" y="21" width="1" height="1" fill="#acacac"/><rect x="264" y="7" width="1" height="1" fill="#efefef"/><rect x="673" y="7" width="1" height="1" fill="#acacac"/><rect x="393" y="10" width="1" height="1" fill="#acacac"/><rect x="813" y="20" width="1" height="1" fill="#b6b6b6"/><rect x="445" y="18" width="1" height="1" fill="#acacac"/><rect x="111" y="41" width="1" height="1" fill="#efefef"/><rect x="287" y="14" width="1" height="1" fill="#bebebe"/><rect x="475" y="3" width="1" height="1" fill="#a2a2a2"/><rect x="408" y="28" width="1" height="1" fill="#acacac"/><rect x="512" y="41" width="1" height="1" fill="#b6b6b6"/><rect x="474" y="2" width="1" height="1" fill="#efefef"/><rect x="263" y="39" width="1" height="1" fill="#bebebe"/><rect x="5" y="16" width="1" height="1" fill="#bebebe"/><rect x="717" y="37" width="1" height="1" fill="#989898"/><rect x="767" y="42" width="1" height="1" fill="#bebebe"/><rect x="234" y="43" width="1" height="1" fill="#f4f4f4"/><rect x="668" y="42" width="1" height="1" fill="#989898"/><rect x="234" y="12" width="1" height="1" fill="#a2a2a2"/><rect x="464" y="28" width="1" height="1" fill="#b6b6b6"/><rect x="266" y="41" width="1" height="1" fill="#a2a2a2"/><rect x="429" y="16" width="1" height="1" fill="#e8e8e8"/><rect x="730" y="41" width="1" height="1" fill="#acacac"/><rect x="256" y="28" width="1" height="1" fill="#bebebe"/><rect x="466" y="2" width="1" height="1" fill="#989898"/><rect x="419" y="34" width="1" height="1" fill="#acacac"/><rect x="670" y="21" width="1" height="1" fill="#efefef"/><rect x="398" y="32" width="1" height="1" fill="#a2a2a2"/><rect x="39" y="17" width="1" height="1" fill="#989898"/><rect x="223" y="11" width="1" height="1" fill="#acacac"/><rect x="531" y="23" width="1" height="1" fill="#a2a2a2"/><rect x="588" y="30" width="1" height="1" fill="#f4f4f4"/><rect x="209" y="31" width="1" height="1" fill="#989898"/><rect x="16" y="41" width="1" height="1" fill="#b6b6b6"/><rect x="534" y="22" width="1" height="1" fill="#bebebe"/><rect x="759" y="30" width="1" height="1" fill="#acacac"/><rect x="700" y="12" width="1" height="1" fill="#e8e8e8"/><rect x="526" y="8" width="1" height="1" fill="#989898"/><rect x="364" y="41" width="1" height="1" fill="#a2a2a2"/><rect x="258" y="18" width="1" height="1" fill="#bebebe"/><rect x="409" y="4" width="1" height="1" fill="#a2a2a2"/><rect x="76" y="27" width="1" height="1" fill="#e8e8e8"/><rect x="643" y="23" width="1" height="1" fill="#989898"/><rect x="271" y="7" width="1" height="1" fill="#acacac"/><rect x="310" y="26" width="1" height="1" fill="#989898"/><rect x="224" y="26" width="1" height="1" fill="#bebebe"/><rect x="217" y="11" width="1" height="1" fill="#efefef"/><rect x="795" y="5" width="1" height="1" fill="#acacac"/><rect x="480" y="42" width="1" height="1" fill="#989898"/><rect x="738" y="15" width="1" height="1" fill="#acacac"/><rect x="361" y="43" width="1" height="1" fill="#bebebe"/><rect x="479" y="19" width="1" height="1" fill="#f4f4f4"/><rect x="665" y="9" width="1" height="1" fill="#bebebe"/><rect x="363" y="15" width="1" height="1" fill="#b6b6b6"/><rect x="721" y="25" width="1" height="1" fill="#b6b6b6"/><rect x="436" y="12" width="1" height="1" fill="#bebebe"/><rect x="2" y="18" width="1" height="1" fill="#e8e8e8"/><rect x="250" y="42" width="1" height="1" fill="#b6b6b6"/><rect x="328" y="31" width="1" height="1" fill="#bebebe"/><rect x="438" y="40" width="1" height="1" fill="#a2a2a2"/><rect x="675" y="24" width="1" height="1" fill="#acacac"/><rect x="310" y="25" width="1" height="1" fill="#efefef"/><rect x="87" y="37" width="1" height="1" fill="#b6b6b6"/><rect x="802" y="9" width="1" height="1" fill="#989898"/><rect x="353" y="41" width="1" height="1" fill="#989898"/><rect x="15" y="43" width="1" height="1" fill="#a2a2a2"/><rect x="214" y="5" width="1" height="1" fill="#f4f4f4"/><rect x="300" y="17" width="1" height="1" fill="#989898"/><rect x="103" y="38" width="1" height="1" fill="#acacac"/><rect x="239" y="12" width="1" height="1" fill="#bebebe"/><rect x="354" y="10" width="1" height="1" fill="#acacac"/><rect x="412" y="35" width="1" height="1" fill="#efefef"/><rect x="624" y="39" width="1" height="1" fill="#a2a2a2"/><rect x="684" y="36" width="1" height="1" fill="#b6b6b6"/><rect x="202" y="32" width="1" height="1" fill="#acacac"/><rect x="543" y="6" width="1" height="1" fill="#bebebe"/><rect x="687" y="8" width="1" height="1" fill="#f4f4f4"/><rect x="121" y="17" width="1" height="1" fill="#bebebe"/><rect x="239" y="9" width="1" height="1" fill="#bebebe"/><rect x="504" y="36" width="1" height="1" fill="#a2a2a2"/><rect x="495" y="30" width="1" height="1" fill="#acacac"/><rect x="717" y="32" width="1" height="1" fill="#efefef"/><rect x="510" y="11" width="1" height="1" fill="#989898"/><rect x="613" y="1" width="1" height="1" fill="#acacac"/><rect x="328" y="30" width="1" height="1" fill="#989898"/><rect x="509" y="43" width="1" height="1" fill="#b6b6b6"/><rect x="476" y="24" width="1" height="1" fill="#e8e8e8"/><rect x="428" y="5" width="1" height="1" fill="#acacac"/><rect x="652" y="24" width="1" height="1" fill="#a2a2a2"/><rect x="21" y="40" width="1" height="1" fill="#a2a2a2"/><rect x="698" y="22" width="1" height="1" fill="#a2a2a2"/><rect x="522" y="31" width="1" height="1" fill="#e8e8e8"/><rect x="775" y="10" width="1" height="1" fill="#a2a2a2"/><rect x="218" y="27" width="1" height="1" fill="#acacac"/><rect x="346" y="7" width="1" height="1" fill="#b6b6b6"/><rect x="349" y="31" width="1" height="1" fill="#989898"/><rect x="567" y="14" width="1" height="1" fill="#e8e8e8"/><rect x="445" y="22" width="1" height="1" fill="#bebebe"/><rect x="257" y="36" width="1" height="1" fill="#a2a2a2"/><rect x="846" y="19" width="1" height="1" fill="#b6b6b6"/><rect x="363" y="32" width="1" height="1" fill="#bebebe"/><rect x="341" y="33" width="1" height="1" fill="#e8e8e8"/><rect x="518" y="23" width="1" height="1" fill="#acacac"/><rect x="670" y="32" width="1" height="1" fill="#a2a2a2"/><rect x="338" y="13" width="1" height="1" fill="#b6b6b6"/><rect x="730" y="20" width="1" height="1" fill="#acacac"/><rect x="600" y="41" width="1" height="1" fill="#efefef"/><rect x="803" y="3" width="1" height="1" fill="#bebebe"/><rect x="740" y="36" width="1" height="1" fill="#bebebe"/><rect x="558" y="37" width="1" height="1" fill="#a2a2a2"/><rect x="408" y="20" width="1" height="1" fill="#a2a2a2"/><rect x="6" y="3" width="1" height="1" fill="#efefef"/><rect x="841" y="31" width="1" height="1" fill="#989898"/><rect x="784" y="43" width="1" height="1" fill="#a2a2a2"/><rect x="807" y="33" width="1" height="1" fill="#989898"/><rect x="626" y="25" width="1" height="1" fill="#989898"/><rect x="150" y="41" width="1" height="1" fill="#f4f4f4"/><rect x="713" y="39" width="1" height="1" fill="#a2a2a2"/><rect x="217" y="3" width="1" height="1" fill="#bebebe"/><rect x="640" y="12" width="1" height="1" fill="#a2a2a2"/><rect x="679" y="12" width="1" height="1" fill="#a2a2a2"/><rect x="431" y="7" width="1" height="1" fill="#f4f4f4"/><rect x="13" y="24" width="1" height="1" fill="#acacac"/><rect x="805" y="20" width="1" height="1" fill="#989898"/><rect x="727" y="17" width="1" height="1" fill="#b6b6b6"/><rect x="189" y="27" width="1" height="1" fill="#a2a2a2"/><rect x="326" y="2" width="1" height="1" fill="#e8e8e8"/><rect x="579" y="42" width="1" height="1" fill="#989898"/><rect x="55" y="32" width="1" height="1" fill="#989898"/><rect x="534" y="3" width="1" height="1" fill="#a2a2a2"/><rect x="792" y="27" width="1" height="1" fill="#989898"/><rect x="712" y="26" width="1" height="1" fill="#e8e8e8"/><rect x="68" y="1" width="1" height="1" fill="#bebebe"/><rect x="608" y="38" width="1" height="1" fill="#acacac"/><rect x="486" y="27" width="1" height="1" fill="#989898"/><rect x="104" y="6" width="1" height="1" fill="#bebebe"/><rect x="217" y="10" width="1" height="1" fill="#f4f4f4"/><rect x="15" y="28" width="1" height="1" fill="#a2a2a2"/><rect x="9" y="43" width="1" height="1" fill="#a2a2a2"/><rect x="90" y="14" width="1" height="1" fill="#a2a2a2"/><rect x="132" y="31" width="1" height="1" fill="#a2a2a2"/><rect x="282" y="37" width="1" height="1" fill="#efefef"/><rect x="461" y="12" width="1" height="1" fill="#a2a2a2"/><rect x="374" y="10" width="1" height="1" fill="#a2a2a2"/><rect x="300" y="41" width="1" height="1" fill="#989898"/><rect x="726" y="32" width="1" height="1" fill="#bebebe"/><rect x="685" y="17" width="1" height="1" fill="#efefef"/><rect x="734" y="3" width="1" height="1" fill="#a2a2a2"/><rect x="62" y="1" width="1" height="1" fill="#989898"/><rect x="81" y="25" width="1" height="1" fill="#b6b6b6"/><rect x="319" y="39" width="1" height="1" fill="#acacac"/><rect x="498" y="39" width="1" height="1" fill="#efefef"/><rect x="323" y="24" width="1" height="1" fill="#989898"/><rect x="745" y="29" width="1" height="1" fill="#bebebe"/><rect x="693" y="11" width="1" height="1" fill="#acacac"/><rect x="816" y="8" width="1" height="1" fill="#b6b6b6"/><rect x="660" y="11" width="1" height="1" fill="#f4f4f4"/><rect x="821" y="27" width="1" height="1" fill="#bebebe"/><rect x="394" y="29" width="1" height="1" fill="#b6b6b6"/><rect x="803" y="37" width="1" height="1" fill="#b6b6b6"/><rect x="299" y="18" width="1" height="1" fill="#a2a2a2"/><rect x="636" y="42" width="1" height="1" fill="#f4f4f4"/><rect x="821" y="39" width="1" height="1" fill="#b6b6b6"/><rect x="620" y="1" width="1" height="1" fill="#acacac"/><rect x="615" y="20" width="1" height="1" fill="#989898"/><rect x="438" y="16" width="1" height="1" fill="#bebebe"/><rect x="396" y="25" width="1" height="1" fill="#f4f4f4"/><rect x="789" y="15" width="1" height="1" fill="#bebebe"/><rect x="290" y="1" width="1" height="1" fill="#b6b6b6"/><rect x="269" y="18" width="1" height="1" fill="#bebebe"/><rect x="161" y="38" width="1" height="1" fill="#a2a2a2"/><rect x="295" y="10" width="1" height="1" fill="#f4f4f4"/><rect x="150" y="18" width="1" height="1" fill="#989898"/><rect x="701" y="32" width="1" height="1" fill="#b6b6b6"/><rect x="547" y="6" width="1" height="1" fill="#989898"/><rect x="566" y="32" width="1" height="1" fill="#bebebe"/><rect x="205" y="15" width="1" height="1" fill="#e8e8e8"/><rect x="621" y="4" width="1" height="1" fill="#bebebe"/><rect x="476" y="14" width="1" height="1" fill="#b6b6b6"/><rect x="600" y="1" width="1" height="1" fill="#bebebe"/><rect x="470" y="35" width="1" height="1" fill="#a2a2a2"/><rect x="549" y="23" width="1" height="1" fill="#efefef"/><rect x="238" y="26" width="1" height="1" fill="#989898"/><rect x="533" y="17" width="1" height="1" fill="#989898"/><rect x="328" y="31" width="1" height="1" fill="#989898"/><rect x="603" y="13" width="1" height="1" fill="#acacac"/><rect x="217" y="13" width="1" height="1" fill="#efefef"/><rect x="185" y="19" width="1" height="1" fill="#b6b6b6"/><rect x="591" y="37" width="1" height="1" fill="#b6b6b6"/><rect x="412" y="34" width="1" height="1" fill="#acacac"/><rect x="252" y="3" width="1" height="1" fill="#bebebe"/><rect x="383" y="7" width="1" height="1" fill="#e8e8e8"/><rect x="647" y="30" width="1" height="1" fill="#a2a2a2"/><rect x="159" y="21" width="1" height="1" fill="#989898"/><rect x="31" y="23" width="1" height="1" fill="#b6b6b6"/><rect x="531" y="39" width="1" height="1" fill="#a2a2a2"/><rect x="96" y="3" width="1" height="1" fill="#efefef"/><rect x="579" y="32" width="1" height="1" fill="#989898"/><rect x="580" y="14" width="1" height="1" fill="#b6b6b6"/><rect x="797" y="18" width="1" height="1" fill="#bebebe"/><rect x="99" y="29" width="1" height="1" fill="#989898"/><rect x="838" y="39" width="1" height="1" fill="#efefef"/><rect x="260" y="3" width="1" height="1" fill="#b6b6b6"/><rect x="205" y="12" width="1" height="1" fill="#bebebe"/><rect x="85" y="2" width="1" height="1" fill="#a2a2a2"/><rect x="35" y="36" width="1" height="1" fill="#b6b6b6"/><rect x="722" y="30" width="1" height="1" fill="#e8e8e8"/><rect x="65" y="39" width="1" height="1" fill="#bebebe"/><rect x="122" y="6" width="1" height="1" fill="#b6b6b6"/><rect x="326" y="37" width="1" height="1" fill="#acacac"/><rect x="656" y="6" width="1" height="1" fill="#989898"/><rect x="402" y="12" width="1" height="1" fill="#e8e8e8"/><rect x="163" y="24" width="1" height="1" fill="#acacac"/><rect x="738" y="15" width="1" height="1" fill="#acacac"/><rect x="39" y="17" width="1" height="1" fill="#b6b6b6"/><rect x="60" y="36" width="1" height="1" fill="#a2a2a2"/><rect x="48" y="17" width="1" height="1" fill="#f4f4f4"/><rect x="726" y="42" width="1" height="1" fill="#bebebe"/><rect x="57" y="7" width="1" height="1" fill="#acacac"/><rect x="325" y="1" width="1" height="1" fill="#acacac"/><rect x="693" y="20" width="1" height="1" fill="#989898"/><rect x="605" y="29" width="1" height="1" fill="#f4f4f4"/><rect x="107" y="31" width="1" height="1" fill="#b6b6b6"/><rect x="380" y="17" width="1" height="1" fill="#bebebe"/><rect x="127" y="24" width="1" height="1" fill="#bebebe"/><rect x="388" y="11" width="1" height="1" fill="#bebebe"/><rect x="244" y="10" width="1" height="1" fill="#f4f4f4"/><rect x="12" y="30" width="1" height="1" fill="#acacac"/><rect x="818" y="3" width="1" height="1" fill="#acacac"/><rect x="225" y="5" width="1" height="1" fill="#989898"/><rect x="382" y="9" width="1" height="1" fill="#bebebe"/><rect x="99" y="25" width="1" height="1" fill="#efefef"/><rect x="643" y="5" width="1" height="1" fill="#bebebe"/><rect x="347" y="21" width="1" height="1" fill="#acacac"/><rect x="488" y="8" width="1" height="1" fill="#b6b6b6"/><rect x="146" y="22" width="1" height="1" fill="#acacac"/><rect x="753" y="4" width="1" height="1" fill="#efefef"/><rect x="730" y="29" width="1" height="1" fill="#989898"/><rect x="148" y="29" width="1" height="1" fill="#acacac"/><rect x="272" y="27" width="1" height="1" fill="#bebebe"/><rect x="252" y="10" width="1" height="1" fill="#a2a2a2"/><rect x="277" y="37" width="1" height="1" fill="#e8e8e8"/><rect x="342" y="11" width="1" height="1" fill="#b6b6b6"/><rect x="502" y="7" width="1" height="1" fill="#b6b6b6"/><rect x="467" y="31" width="1" height="1" fill="#a2a2a2"/><rect x="157" y="33" width="1" height="1" fill="#a2a2a2"/><rect x="646" y="43" width="1" height="1" fill="#efefef"/><rect x="573" y="31" width="1" height="1" fill="#b6b6b6"/><rect x="122" y="17" width="1" height="1" fill="#acacac"/><rect x="373" y="28" width="1" height="1" fill="#b6b6b6"/><rect x="244" y="16" width="1" height="1" fill="#a2a2a2"/><rect x="399" y="19" width="1" height="1" fill="#e8e8e8"/><rect x="166" y="4" width="1" height="1" fill="#b6b6b6"/><rect x="147" y="41" width="1" height="1" fill="#a2a2a2"/><rect x="452" y="33" width="1" height="1" fill="#b6b6b6"/><rect x="523" y="9" width="1" height="1" fill="#bebebe"/><rect x="1" y="34" width="1" height="1" fill="#e8e8e8"/><rect x="190" y="24" width="1" height="1" fill="#bebebe"/><rect x="41" y="27" width="1" height="1" fill="#acacac"/><rect x="283" y="37" width="1" height="1" fill="#acacac"/><rect x="141" y="12" width="1" height="1" fill="#989898"/><rect x="788" y="15" width="1" height="1" fill="#f4f4f4"/><rect x="179" y="13" width="1" height="1" fill="#989898"/><rect x="81" y="6" width="1" height="1" fill="#989898"/><rect x="748" y="32" width="1" height="1" fill="#b6b6b6"/><rect x="179" y="14" width="1" height="1" fill="#acacac"/><rect x="627" y="43" width="1" height="1" fill="#f4f4f4"/><rect x="643" y="13" width="1" height="1" fill="#989898"/><rect x="315" y="13" width="1" height="1" fill="#a2a2a2"/><rect x="67" y="34" width="1" height="1" fill="#bebebe"/><rect x="738" y="4" width="1" height="1" fill="#989898"/><rect x="830" y="23" width="1" height="1" fill="#e8e8e8"/><rect x="288" y="41" width="1" height="1" fill="#bebebe"/><rect x="92" y="1" width="1" height="1" fill="#bebebe"/><rect x="781" y="31" width="1" height="1" fill="#acacac"/><rect x="681" y="18" width="1" height="1" fill="#acacac"/><rect x="190" y="37" width="1" height="1" fill="#e8e8e8"/><rect x="37" y="11" width="1" height="1" fill="#b6b6b6"/><rect x="588" y="39" width="1" height="1" fill="#a2a2a2"/><rect x="364" y="34" width="1" height="1" fill="#bebebe"/><rect x="528" y="5" width="1" height="1" fill="#a2a2a2"/><rect x="365" y="16" width="1" height="1" fill="#e8e8e8"/><rect x="797" y="25" width="1" height="1" fill="#989898"/><rect x="769" y="4" width="1" height="1" fill="#b6b6b6"/><rect x="110" y="32" width="1" height="1" fill="#bebebe"/><rect x="525" y="2" width="1" height="1" fill="#989898"/><rect x="823" y="35" width="1" height="1" fill="#efefef"/><rect x="21" y="16" width="1" height="1" fill="#a2a2a2"/><rect x="229" y="40" width="1" height="1" fill="#acacac"/><rect x="171" y="7" width="1" height="1" fill="#b6b6b6"/><rect x="256" y="36" width="1" height="1" fill="#a2a2a2"/><rect x="19" y="7" width="1" height="1" fill="#f4f4f4"/><rect x="756" y="13" width="1" height="1" fill="#b6b6b6"/><rect x="18" y="39" width="1" height="1" fill="#989898"/><rect x="475" y="34" width="1" height="1" fill="#acacac"/><rect x="719" y="29" width="1" height="1" fill="#a2a2a2"/><rect x="359" y="7" width="1" height="1" fill="#f4f4f4"/><rect x="183" y="3" width="1" height="1" fill="#b6b6b6"/><rect x="126" y="30" width="1" height="1" fill="#bebebe"/><rect x="599" y="33" width="1" height="1" fill="#b6b6b6"/><rect x="112" y="8" width="1" height="1" fill="#a2a2a2"/><rect x="415" y="9" width="1" height="1" fill="#f4f4f4"/><rect x="606" y="15" width="1" height="1" fill="#acacac"/><rect x="150" y="43" width="1" height="1" fill="#989898"/><rect x="473" y="26" width="1" height="1" fill="#acacac"/><rect x="845" y="2" width="1" height="1" fill="#bebebe"/><rect x="710" y="27" width="1" height="1" fill="#f4f4f4"/><rect x="617" y="34" width="1" height="1" fill="#a2a2a2"/><rect x="405" y="4" width="1" height="1" fill="#b6b6b6"/><rect x="346" y="26" width="1" height="1" fill="#acacac"/><rect x="343" y="28" width="1" height="1" fill="#989898"/><rect x="823" y="21" width="1" height="1" fill="#e8e8e8"/><rect x="574" y="4" width="1" height="1" fill="#b6b6b6"/><rect x="529" y="10" width="1" height="1" fill="#b6b6b6"/><rect x="255" y="28" width="1" height="1" fill="#a2a2a2"/><rect x="373" y="7" width="1" height="1" fill="#989898"/><rect x="191" y="5" width="1" height="1" fill="#e8e8e8"/><rect x="443" y="13" width="1" height="1" fill="#989898"/><rect x="685" y="2" width="1" height="1" fill="#acacac"/><rect x="142" y="27" width="1" height="1" fill="#bebebe"/><rect x="795" y="30" width="1" height="1" fill="#a2a2a2"/><rect x="828" y="3" width="1" height="1" fill="#efefef"/><rect x="656" y="40" width="1" height="1" fill="#b6b6b6"/><rect x="694" y="40" width="1" height="1" fill="#b6b6b6"/><rect x="643" y="35" width="1" height="1" fill="#a2a2a2"/><rect x="636" y="7" width="1" height="1" fill="#b6b6b6"/><rect x="124" y="34" width="1" height="1" fill="#efefef"/><rect x="444" y="16" width="1" height="1" fill="#a2a2a2"/><rect x="294" y="8" width="1" height="1" fill="#b6b6b6"/><rect x="355" y="42" width="1" height="1" fill="#acacac"/><rect x="123" y="4" width="1" height="1" fill="#989898"/><rect x="526" y="18" width="1" height="1" fill="#efefef"/><rect x="477" y="38" width="1" height="1" fill="#989898"/><rect x="151" y="29" width="1" height="1" fill="#a2a2a2"/><rect x="523" y="9" width="1" height="1" fill="#b6b6b6"/><rect x="416" y="37" width="1" height="1" fill="#b6b6b6"/><rect x="280" y="16" width="1" height="1" fill="#f4f4f4"/><rect x="89" y="35" width="1" height="1" fill="#b6b6b6"/><rect x="465" y="40" width="1" height="1" fill="#989898"/><rect x="226" y="42" width="1" height="1" fill="#bebebe"/><rect x="206" y="36" width="1" height="1" fill="#b6b6b6"/><rect x="471" y="36" width="1" height="1" fill="#e8e8e8"/><rect x="627" y="31" width="1" height="1" fill="#bebebe"/><rect x="838" y="20" width="1" height="1" fill="#a2a2a2"/><rect x="248" y="22" width="1" height="1" fill="#acacac"/><rect x="193" y="33" width="1" height="1" fill="#989898"/><rect x="392" y="38" width="1" height="1" fill="#e8e8e8"/><rect x="12" y="23" width="1" height="1" fill="#acacac"/><rect x="244" y="21" width="1" height="1" fill="#989898"/><rect x="333" y="32" width="1" height="1" fill="#b6b6b6"/><rect x="291" y="14" width="1" height="1" fill="#b6b6b6"/><rect x="58" y="2" width="1" height="1" fill="#efefef"/><rect x="564" y="5" width="1" height="1" fill="#989898"/><rect x="356" y="29" width="1" height="1" fill="#a2a2a2"/><rect x="529" y="25" width="1" height="1" fill="#bebebe"/><rect x="362" y="7" width="1" height="1" fill="#989898"/><rect x="230" y="10" width="1" height="1" fill="#e8e8e8"/><rect x="345" y="43" width="1" height="1" fill="#b6b6b6"/><rect x="143" y="13" width="1" height="1" fill="#989898"/><rect x="625" y="18" width="1" height="1" fill="#989898"/><rect x="97" y="31" width="1" height="1" fill="#b6b6b6"/><rect x="803" y="41" width="1" height="1" fill="#f4f4f4"/><rect x="647" y="9" width="1" height="1" fill="#bebebe"/><rect x="105" y="1" width="1" height="1" fill="#bebebe"/><rect x="784" y="36" width="1" height="1" fill="#989898"/><rect x="120" y="32" width="1" height="1" fill="#bebebe"/><rect x="585" y="10" width="1" height="1" fill="#e8e8e8"/><rect x="802" y="18" width="1" height="1" fill="#989898"/><rect x="621" y="8" width="1" height="1" fill="#bebebe"/><rect x="463" y="30" width="1" height="1" fill="#b6b6b6"/><rect x="740" y="23" width="1" height="1" fill="#b6b6b6"/><rect x="361" y="26" width="1" height="1" fill="#f4f4f4"/><rect x="568" y="39" width="1" height="1" fill="#bebebe"/><rect x="663" y="21" width="1" height="1" fill="#a2a2a2"/><rect x="805" y="32" width="1" height="1" fill="#bebebe"/><rect x="454" y="20" width="1" height="1" fill="#acacac"/><rect x="549" y="20" width="1" height="1" fill="#efefef"/><rect x="446" y="37" width="1" height="1" fill="#bebebe"/><rect x="595" y="15" width="1" height="1" fill="#a2a2a2"/><rect x="841" y="22" width="1" height="1" fill="#b6b6b6"/><rect x="622" y="16" width="1" height="1" fill="#b6b6b6"/><rect x="209" y="28" width="1" height="1" fill="#efefef"/><rect x="26" y="4" width="1" height="1" fill="#b6b6b6"/><rect x="578" y="32" width="1" height="1" fill="#b6b6b6"/><rect x="549" y="20" width="1" height="1" fill="#989898"/><rect x="634" y="28" width="1" height="1" fill="#989898"/><rect x="845" y="34" width="1" height="1" fill="#f4f4f4"/><rect x="701" y="28" width="1" height="1" fill="#bebebe"/><rect x="475" y="23" width="1" height="1" fill="#a2a2a2"/><rect x="608" y="23" width="1" height="1" fill="#bebebe"/><rect x="10" y="5" width="1" height="1" fill="#989898"/><rect x="234" y="7" width="1" height="1" fill="#e8e8e8"/><rect x="383" y="33" width="1" height="1" fill="#bebebe"/><rect x="664" y="36" width="1" height="1" fill="#989898"/><rect x="157" y="13" width="1" height="1" fill="#bebebe"/><rect x="498" y="26" width="1" height="1" fill="#bebebe"/><rect x="785" y="40" width="1" height="1" fill="#f4f4f4"/><rect x="351" y="34" width="1" height="1" fill="#a2a2a2"/><rect x="174" y="24" width="1" height="1" fill="#b6b6b6"/><rect x="375" y="5" width="1" height="1" fill="#b6b6b6"/><rect x="524" y="12" width="1" height="1" fill="#a2a2a2"/><rect x="671" y="19" width="1" height="1" fill="#f4f4f4"/><rect x="351" y="33" width="1" height="1" fill="#bebebe"/><rect x="646" y="11" width="1" height="1" fill="#989898"/><rect x="296" y="33" width="1" height="1" fill="#acacac"/><rect x="517" y="13" width="1" height="1" fill="#bebebe"/><rect x="186" y="4" width="1" height="1" fill="#f4f4f4"/><rect x="578" y="39" width="1" height="1" fill="#a2a2a2"/><rect x="361" y="37" width="1" height="1" fill="#a2a2a2"/><rect x="708" y="27" width="1" height="1" fill="#a2a2a2"/><rect x="806" y="1" width="1" height="1" fill="#b6b6b6"/><rect x="727" y="36" width="1" height="1" fill="#efefef"/><rect x="311" y="26" width="1" height="1" fill="#a2a2a2"/><rect x="600" y="1" width="1" height="1" fill="#a2a2a2"/><rect x="201" y="12" width="1" height="1" fill="#bebebe"/><rect x="787" y="36" width="1" height="1" fill="#989898"/><rect x="272" y="42" width="1" height="1" fill="#f4f4f4"/><rect x="526" y="10" width="1" height="1" fill="#989898"/><rect x="203" y="27" width="1" height="1" fill="#989898"/><rect x="124" y="10" width="1" height="1" fill="#acacac"/><rect x="530" y="33" width="1" height="1" fill="#a2a2a2"/><rect x="29" y="7" width="1" height="1" fill="#efefef"/><rect x="174" y="34" width="1" height="1" fill="#bebebe"/><rect x="842" y="30" width="1" height="1" fill="#989898"/><rect x="440" y="4" width="1" height="1" fill="#a2a2a2"/><rect x="700" y="38" width="1" height="1" fill="#b6b6b6"/><rect x="147" y="16" width="1" height="1" fill="#e8e8e8"/><rect x="282" y="11" width="1" height="1" fill="#a2a2a2"/><rect x="273" y="41" width="1" height="1" fill="#a2a2a2"/><rect x="596" y="5" width="1" height="1" fill="#b6b6b6"/><rect x="196" y="29" width="1" height="1" fill="#989898"/><rect x="394" y="2" width="1" height="1" fill="#efefef"/><rect x="225" y="26" width="1" height="1" fill="#989898"/><rect x="782" y="3" width="1" height="1" fill="#bebebe"/><rect x="55" y="40" width="1" height="1" fill="#acacac"/><rect x="255" y="15" width="1" height="1" fill="#a2a2a2"/><rect x="163" y="38" width="1" height="1" fill="#efefef"/><rect x="322" y="1" width="1" height="1" fill="#bebebe"/><rect x="310" y="27" width="1" height="1" fill="#989898"/><rect x="258" y="32" width="1" height="1" fill="#a2a2a2"/><rect x="248" y="25" width="1" height="1" fill="#989898"/><rect x="226" y="27" width="1" height="1" fill="#e8e8e8"/><rect x="408" y="32" width="1" height="1" fill="#a2a2a2"/><rect x="811" y="16" width="1" height="1" fill="#a2a2a2"/><rect x="177" y="11" width="1" height="1" fill="#b6b6b6"/><rect x="388" y="12" width="1" height="1" fill="#a2a2a2"/><rect x="297" y="26" width="1" height="1" fill="#f4f4f4"/><rect x="371" y="8" width="1" height="1" fill="#b6b6b6"/><rect x="546" y="25" width="1" height="1" fill="#b6b6b6"/><rect x="412" y="42" width="1" height="1" fill="#a2a2a2"/><rect x="126" y="28" width="1" height="1" fill="#b6b6b6"/><rect x="567" y="16" width="1" height="1" fill="#e8e8e8"/><rect x="195" y="30" width="1" height="1" fill="#b6b6b6"/><rect x="352" y="16" width="1" height="1" fill="#bebebe"/><rect x="35" y="18" width="1" height="1" fill="#a2a2a2"/><rect x="349" y="10" width="1" height="1" fill="#acacac"/><rect x="722" y="9" width="1" height="1" fill="#efefef"/><rect x="201" y="18" width="1" height="1" fill="#989898"/><rect x="806" y="9" width="1" height="1" fill="#989898"/><rect x="453" y="30" width="1" height="1" fill="#acacac"/><rect x="163" y="24" width="1" height="1" fill="#b6b6b6"/><rect x="221" y="26" width="1" height="1" fill="#e8e8e8"/><rect x="644" y="38" width="1" height="1" fill="#acacac"/><rect x="304" y="31" width="1" height="1" fill="#989898"/><rect x="209" y="15" width="1" height="1" fill="#bebebe"/><rect x="691" y="9" width="1" height="1" fill="#b6b6b6"/><rect x="610" y="29" width="1" height="1" fill="#f4f4f4"/><rect x="376" y="35" width="1" height="1" fill="#acacac"/><rect x="413" y="39" width="1" height="1" fill="#989898"/><rect x="217" y="9" width="1" height="1" fill="#a2a2a2"/><rect x="694" y="33" width="1" height="1" fill="#a2a2a2"/><rect x="555" y="18" width="1" height="1" fill="#f4f4f4"/><rect x="790" y="25" width="1" height="1" fill="#a2a2a2"/><rect x="673" y="37" width="1" height="1" fill="#acacac"/><rect x="318" y="1" width="1" height="1" fill="#bebebe"/><rect x="727" y="6" width="1" height="1" fill="#acacac"/><rect x="794" y="15" width="1" height="1" fill="#e8e8e8"/><rect x="192" y="43" width="1" height="1" fill="#a2a2a2"/><rect x="69" y="36" width="1" height="1" fill="#b6b6b6"/><rect x="824" y="33" width="1" height="1" fill="#b6b6b6"/><rect x="197" y="5" width="1" height="1" fill="#b6b6b6"/><rect x="90" y="15" width="1" height="1" fill="#e8e8e8"/><rect x="129" y="26" width="1" height="1" fill="#b6b6b6"/><rect x="364" y="26" width="1" height="1" fill="#bebebe"/><rect x="793" y="41" width="1" height="1" fill="#acacac"/><rect x="283" y="12" width="1" height="1" fill="#a2a2a2"/><rect x="375" y="43" width="1" height="1" fill="#f4f4f4"/><rect x="359" y="27" width="1" height="1" fill="#a2a2a2"/><rect x="674" y="30" width="1" height="1" fill="#acacac"/><rect x="410" y="23" width="1" height="1" fill="#a2a2a2"/><rect x="186" y="19" width="1" height="1" fill="#a2a2a2"/><rect x="277" y="39" width="1" height="1" fill="#f4f4f4"/><rect x="224" y="3" width="1" height="1" fill="#bebebe"/><rect x="40" y="39" width="1" height="1" fill="#acacac"/><rect x="441" y="13" width="1" height="1" fill="#b6b6b6"/><rect x="159" y="25" width="1" height="1" fill="#a2a2a2"/><rect x="565" y="20" width="1" height="1" fill="#f4f4f4"/><rect x="653" y="12" width="1" height="1" fill="#989898"/><rect x="233" y="37" width="1" height="1" fill="#bebebe"/><rect x="733" y="34" width="1" height="1" fill="#b6b6b6"/><rect x="445" y="43" width="1" height="1" fill="#989898"/><rect x="357" y="1" width="1" height="1" fill="#efefef"/><rect x="782" y="42" width="1" height="1" fill="#b6b6b6"/><rect x="43" y="38" width="1" height="1" fill="#989898"/><rect x="712" y="4" width="1" height="1" fill="#acacac"/><rect x="697" y="8" width="1" height="1" fill="#a2a2a2"/><rect x="810" y="21" width="1" height="1" fill="#efefef"/><rect x="795" y="23" width="1" height="1" fill="#a2a2a2"/><rect x="427" y="26" width="1" height="1" fill="#989898"/><rect x="848" y="15" width="1" height="1" fill="#b6b6b6"/><rect x="539" y="6" width="1" height="1" fill="#b6b6b6"/><rect x="434" y="29" width="1" height="1" fill="#e8e8e8"/><rect x="708" y="33" width="1" height="1" fill="#bebebe"/><rect x="520" y="4" width="1" height="1" fill="#acacac"/><rect x="438" y="33" width="1" height="1" fill="#acacac"/><rect x="501" y="13" width="1" height="1" fill="#a2a2a2"/><rect x="719" y="36" width="1" height="1" fill="#e8e8e8"/><rect x="178" y="35" width="1" height="1" fill="#acacac"/><rect x="799" y="41" width="1" height="1" fill="#acacac"/><rect x="556" y="17" width="1" height="1" fill="#acacac"/><rect x="60" y="11" width="1" height="1" fill="#b6b6b6"/><rect x="5" y="254" width="1" height="1" fill="#efefef"/><rect x="3" y="369" width="1" height="1" fill="#b6b6b6"/><rect x="2" y="113" width="1" height="1" fill="#bebebe"/><rect x="10" y="291" width="1" height="1" fill="#acacac"/><rect x="3" y="47" width="1" height="1" fill="#989898"/><rect x="7" y="112" width="1" height="1" fill="#f4f4f4"/><rect x="5" y="401" width="1" height="1" fill="#b6b6b6"/><rect x="2" y="406" width="1" height="1" fill="#acacac"/><rect x="9" y="332" width="1" height="1" fill="#acacac"/><rect x="5" y="366" width="1" height="1" fill="#a2a2a2"/><rect x="8" y="261" width="1" height="1" fill="#efefef"/><rect x="10" y="385" width="1" height="1" fill="#acacac"/><rect x="9" y="280" width="1" height="1" fill="#bebebe"/><rect x="3" y="102" width="1" height="1" fill="#b6b6b6"/><rect x="0" y="228" width="1" height="1" fill="#bebebe"/><rect x="3" y="66" width="1" height="1" fill="#efefef"/><rect x="4" y="199" width="1" height="1" fill="#acacac"/><rect x="1" y="403" width="1" height="1" fill="#b6b6b6"/><rect x="7" y="101" width="1" height="1" fill="#acacac"/><rect x="5" y="271" width="1" height="1" fill="#bebebe"/><rect x="9" y="229" width="1" height="1" fill="#e8e8e8"/><rect x="2" y="329" width="1" height="1" fill="#a2a2a2"/><rect x="0" y="49" width="1" height="1" fill="#bebebe"/><rect x="7" y="86" width="1" height="1" fill="#b6b6b6"/><rect x="9" y="179" width="1" height="1" fill="#a2a2a2"/><rect x="10" y="294" width="1" height="1" fill="#e8e8e8"/><rect x="7" y="141" width="1" height="1" fill="#989898"/><rect x="5" y="48" width="1" height="1" fill="#b6b6b6"/><rect x="1" y="373" width="1" height="1" fill="#b6b6b6"/><rect x="10" y="358" width="1" height="1" fill="#b6b6b6"/><rect x="10" y="169" width="1" height="1" fill="#efefef"/><rect x="2" y="426" width="1" height="1" fill="#a2a2a2"/><rect x="0" y="440" width="1" height="1" fill="#bebebe"/><rect x="2" y="195" width="1" height="1" fill="#b6b6b6"/><rect x="2" y="370" width="1" height="1" fill="#989898"/><rect x="10" y="130" width="1" height="1" fill="#efefef"/><rect x="4" y="424" width="1" height="1" fill="#989898"/><rect x="5" y="238" width="1" height="1" fill="#acacac"/><rect x="10" y="226" width="1" height="1" fill="#b6b6b6"/><rect x="3" y="232" width="1" height="1" fill="#acacac"/><rect x="8" y="233" width="1" height="1" fill="#e8e8e8"/><rect x="3" y="73" width="1" height="1" fill="#a2a2a2"/><rect x="1" y="334" width="1" height="1" fill="#bebebe"/><rect x="0" y="154" width="1" height="1" fill="#bebebe"/><rect x="6" y="299" width="1" height="1" fill="#acacac"/><rect x="4" y="352" width="1" height="1" fill="#f4f4f4"/><rect x="10" y="85" width="1" height="1" fill="#acacac"/><rect x="3" y="127" width="1" height="1" fill="#acacac"/><rect x="7" y="370" width="1" height="1" fill="#bebebe"/><rect x="1" y="64" width="1" height="1" fill="#bebebe"/><rect x="7" y="141" width="1" height="1" fill="#efefef"/><rect x="5" y="45" width="1" height="1" fill="#a2a2a2"/><rect x="9" y="305" width="1" height="1" fill="#bebebe"/><rect x="2" y="189" width="1" height="1" fill="#a2a2a2"/><rect x="10" y="72" width="1" height="1" fill="#989898"/><rect x="6" y="217" width="1" height="1" fill="#efefef"/><rect x="7" y="48" width="1" height="1" fill="#acacac"/><rect x="2" y="237" width="1" height="1" fill="#b6b6b6"/><rect x="0" y="270" width="1" height="1" fill="#989898"/><rect x="10" y="222" width="1" height="1" fill="#989898"/><rect x="3" y="284" width="1" height="1" fill="#efefef"/><rect x="8" y="209" width="1" height="1" fill="#989898"/><rect x="7" y="263" width="1" height="1" fill="#989898"/><rect x="10" y="123" width="1" height="1" fill="#bebebe"/><rect x="9" y="361" width="1" height="1" fill="#a2a2a2"/><rect x="0" y="414" width="1" height="1" fill="#f4f4f4"/><rect x="5" y="355" width="1" height="1" fill="#b6b6b6"/><rect x="9" y="336" width="1" height="1" fill="#bebebe"/><rect x="5" y="290" width="1" height="1" fill="#acacac"/><rect x="4" y="219" width="1" height="1" fill="#989898"/><rect x="10" y="58" width="1" height="1" fill="#efefef"/><rect x="3" y="391" width="1" height="1" fill="#bebebe"/><rect x="1" y="119" width="1" height="1" fill="#989898"/><rect x="5" y="328" width="1" height="1" fill="#989898"/><rect x="6" y="228" width="1" height="1" fill="#989898"/><rect x="3" y="333" width="1" height="1" fill="#e8e8e8"/><rect x="6" y="177" width="1" height="1" fill="#a2a2a2"/><rect x="3" y="136" width="1" height="1" fill="#acacac"/><rect x="8" y="427" width="1" height="1" fill="#a2a2a2"/><rect x="3" y="173" width="1" height="1" fill="#a2a2a2"/><rect x="3" y="315" width="1" height="1" fill="#f4f4f4"/><rect x="4" y="407" width="1" height="1" fill="#bebebe"/><rect x="3" y="327" width="1" height="1" fill="#bebebe"/><rect x="3" y="321" width="1" height="1" fill="#989898"/><rect x="1" y="420" width="1" height="1" fill="#989898"/><rect x="9" y="334" width="1" height="1" fill="#efefef"/><rect x="6" y="391" width="1" height="1" fill="#a2a2a2"/><rect x="7" y="112" width="1" height="1" fill="#989898"/><rect x="8" y="303" width="1" height="1" fill="#a2a2a2"/><rect x="10" y="413" width="1" height="1" fill="#989898"/><rect x="1" y="279" width="1" height="1" fill="#f4f4f4"/><rect x="6" y="322" width="1" height="1" fill="#acacac"/><rect x="3" y="332" width="1" height="1" fill="#bebebe"/><rect x="1" y="114" width="1" height="1" fill="#b6b6b6"/><rect x="9" y="73" width="1" height="1" fill="#bebebe"/><rect x="3" y="68" width="1" height="1" fill="#e8e8e8"/><rect x="0" y="51" width="1" height="1" fill="#989898"/><rect x="3" y="279" width="1" height="1" fill="#b6b6b6"/><rect x="1" y="406" width="1" height="1" fill="#acacac"/><rect x="6" y="88" width="1" height="1" fill="#989898"/><rect x="3" y="332" width="1" height="1" fill="#efefef"/><rect x="5" y="130" width="1" height="1" fill="#b6b6b6"/><rect x="5" y="434" width="1" height="1" fill="#a2a2a2"/><rect x="4" y="106" width="1" height="1" fill="#acacac"/><rect x="5" y="306" width="1" height="1" fill="#989898"/><rect x="5" y="413" width="1" height="1" fill="#e8e8e8"/><rect x="0" y="353" width="1" height="1" fill="#b6b6b6"/><rect x="1" y="226" width="1" height="1" fill="#989898"/><rect x="5" y="352" width="1" height="1" fill="#a2a2a2"/><rect x="0" y="389" width="1" height="1" fill="#acacac"/><rect x="4" y="225" width="1" height="1" fill="#efefef"/><rect x="7" y="54" width="1" height="1" fill="#989898"/><rect x="7" y="102" width="1" height="1" fill="#a2a2a2"/><rect x="7" y="100" width="1" height="1" fill="#a2a2a2"/><rect x="4" y="138" width="1" height="1" fill="#acacac"/><rect x="8" y="192" width="1" height="1" fill="#f4f4f4"/><rect x="10" y="238" width="1" height="1" fill="#acacac"/><rect x="9" y="172" width="1" height="1" fill="#989898"/><rect x="4" y="271" width="1" height="1" fill="#a2a2a2"/><rect x="0" y="219" width="1" height="1" fill="#acacac"/><rect x="7" y="300" width="1" height="1" fill="#e8e8e8"/><rect x="0" y="62" width="1" height="1" fill="#a2a2a2"/><rect x="2" y="361" width="1" height="1" fill="#989898"/><rect x="6" y="287" width="1" height="1" fill="#acacac"/><rect x="7" y="245" width="1" height="1" fill="#acacac"/><rect x="9" y="308" width="1" height="1" fill="#efefef"/><rect x="5" y="212" width="1" height="1" fill="#989898"/><rect x="3" y="203" width="1" height="1" fill="#acacac"/><rect x="9" y="363" width="1" height="1" fill="#a2a2a2"/><rect x="3" y="130" width="1" height="1" fill="#b6b6b6"/><rect x="7" y="213" width="1" height="1" fill="#f4f4f4"/><rect x="7" y="242" width="1" height="1" fill="#b6b6b6"/><rect x="5" y="47" width="1" height="1" fill="#b6b6b6"/><rect x="9" y="291" width="1" height="1" fill="#b6b6b6"/><rect x="3" y="54" width="1" height="1" fill="#acacac"/><rect x="7" y="355" width="1" height="1" fill="#efefef"/><rect x="10" y="118" width="1" height="1" fill="#acacac"/><rect x="4" y="240" width="1" height="1" fill="#b6b6b6"/><rect x="1" y="300" width="1" height="1" fill="#b6b6b6"/><rect x="5" y="335" width="1" height="1" fill="#989898"/><rect x="846" y="343" width="1" height="1" fill="#efefef"/><rect x="849" y="61" width="1" height="1" fill="#989898"/><rect x="839" y="146" width="1" height="1" fill="#bebebe"/><rect x="848" y="336" width="1" height="1" fill="#a2a2a2"/><rect x="843" y="188" width="1" height="1" fill="#acacac"/><rect x="840" y="392" width="1" height="1" fill="#efefef"/><rect x="842" y="434" width="1" height="1" fill="#b6b6b6"/><rect x="849" y="229" width="1" height="1" fill="#989898"/><rect x="848" y="169" width="1" height="1" fill="#b6b6b6"/><rect x="846" y="410" width="1" height="1" fill="#bebebe"/><rect x="843" y="74" width="1" height="1" fill="#f4f4f4"/><rect x="843" y="387" width="1" height="1" fill="#b6b6b6"/><rect x="845" y="301" width="1" height="1" fill="#b6b6b6"/><rect x="841" y="164" width="1" height="1" fill="#b6b6b6"/><rect x="840" y="113" width="1" height="1" fill="#acacac"/><rect x="838" y="387" width="1" height="1" fill="#e8e8e8"/><rect x="844" y="272" width="1" height="1" fill="#bebebe"/><rect x="847" y="439" width="1" height="1" fill="#b6b6b6"/><rect x="840" y="344" width="1" height="1" fill="#a2a2a2"/><rect x="840" y="198" width="1" height="1" fill="#b6b6b6"/><rect x="842" y="416" width="1" height="1" fill="#f4f4f4"/><rect x="846" y="381" width="1" height="1" fill="#b6b6b6"/><rect x="839" y="141" width="1" height="1" fill="#989898"/><rect x="839" y="343" width="1" height="1" fill="#acacac"/><rect x="842" y="341" width="1" height="1" fill="#b6b6b6"/><rect x="845" y="226" width="1" height="1" fill="#f4f4f4"/><rect x="844" y="413" width="1" height="1" fill="#a2a2a2"/><rect x="845" y="207" width="1" height="1" fill="#acacac"/><rect x="842" y="175" width="1" height="1" fill="#989898"/><rect x="838" y="432" width="1" height="1" fill="#acacac"/><rect x="848" y="181" width="1" height="1" fill="#efefef"/><rect x="849" y="54" width="1" height="1" fill="#acacac"/><rect x="838" y="248" width="1" height="1" fill="#bebebe"/><rect x="841" y="352" width="1" height="1" fill="#b6b6b6"/><rect x="846" y="375" width="1" height="1" fill="#a2a2a2"/><rect x="841" y="167" width="1" height="1" fill="#f4f4f4"/><rect x="838" y="110" width="1" height="1" fill="#989898"/><rect x="838" y="84" width="1" height="1" fill="#a2a2a2"/><rect x="847" y="218" width="1" height="1" fill="#acacac"/><rect x="838" y="140" width="1" height="1" fill="#b6b6b6"/><rect x="846" y="372" width="1" height="1" fill="#efefef"/><rect x="848" y="209" width="1" height="1" fill="#a2a2a2"/><rect x="841" y="208" width="1" height="1" fill="#b6b6b6"/><rect x="849" y="57" width="1" height="1" fill="#bebebe"/><rect x="844" y="356" width="1" height="1" fill="#b6b6b6"/><rect x="840" y="73" width="1" height="1" fill="#e8e8e8"/><rect x="838" y="88" width="1" height="1" fill="#989898"/><rect x="843" y="441" width="1" height="1" fill="#bebebe"/><rect x="847" y="248" width="1" height="1" fill="#b6b6b6"/><rect x="845" y="50" width="1" height="1" fill="#a2a2a2"/><rect x="843" y="332" width="1" height="1" fill="#f4f4f4"/><rect x="843" y="72" width="1" height="1" fill="#bebebe"/><rect x="847" y="407" width="1" height="1" fill="#b6b6b6"/><rect x="840" y="91" width="1" height="1" fill="#a2a2a2"/><rect x="840" y="151" width="1" height="1" fill="#acacac"/><rect x="846" y="436" width="1" height="1" fill="#efefef"/><rect x="843" y="229" width="1" height="1" fill="#bebebe"/><rect x="843" y="319" width="1" height="1" fill="#989898"/><rect x="846" y="122" width="1" height="1" fill="#989898"/><rect x="847" y="213" width="1" height="1" fill="#acacac"/><rect x="849" y="360" width="1" height="1" fill="#e8e8e8"/><rect x="849" y="288" width="1" height="1" fill="#a2a2a2"/><rect x="848" y="202" width="1" height="1" fill="#989898"/><rect x="849" y="276" width="1" height="1" fill="#989898"/><rect x="842" y="229" width="1" height="1" fill="#989898"/><rect x="846" y="184" width="1" height="1" fill="#efefef"/><rect x="842" y="48" width="1" height="1" fill="#989898"/><rect x="845" y="95" width="1" height="1" fill="#b6b6b6"/><rect x="840" y="365" width="1" height="1" fill="#acacac"/><rect x="844" y="431" width="1" height="1" fill="#a2a2a2"/><rect x="838" y="363" width="1" height="1" fill="#efefef"/><rect x="839" y="74" width="1" height="1" fill="#989898"/><rect x="846" y="148" width="1" height="1" fill="#989898"/><rect x="840" y="176" width="1" height="1" fill="#989898"/><rect x="843" y="421" width="1" height="1" fill="#acacac"/><rect x="840" y="421" width="1" height="1" fill="#efefef"/><rect x="846" y="58" width="1" height="1" fill="#b6b6b6"/><rect x="849" y="168" width="1" height="1" fill="#bebebe"/><rect x="845" y="153" width="1" height="1" fill="#b6b6b6"/><rect x="844" y="279" width="1" height="1" fill="#acacac"/><rect x="843" y="57" width="1" height="1" fill="#efefef"/><rect x="848" y="419" width="1" height="1" fill="#a2a2a2"/><rect x="839" y="374" width="1" height="1" fill="#bebebe"/><rect x="848" y="223" width="1" height="1" fill="#a2a2a2"/><rect x="841" y="332" width="1" height="1" fill="#bebebe"/><rect x="844" y="236" width="1" height="1" fill="#f4f4f4"/><rect x="848" y="158" width="1" height="1" fill="#a2a2a2"/><rect x="842" y="54" width="1" height="1" fill="#b6b6b6"/><rect x="849" y="266" width="1" height="1" fill="#acacac"/><rect x="841" y="225" width="1" height="1" fill="#acacac"/><rect x="843" y="432" width="1" height="1" fill="#e8e8e8"/><rect x="848" y="186" width="1" height="1" fill="#b6b6b6"/><rect x="845" y="154" width="1" height="1" fill="#989898"/><rect x="840" y="288" width="1" height="1" fill="#b6b6b6"/><rect x="840" y="197" width="1" height="1" fill="#b6b6b6"/><rect x="839" y="213" width="1" height="1" fill="#efefef"/><rect x="845" y="171" width="1" height="1" fill="#acacac"/><rect x="843" y="393" width="1" height="1" fill="#989898"/><rect x="847" y="275" width="1" height="1" fill="#acacac"/><rect x="847" y="70" width="1" height="1" fill="#acacac"/><rect x="849" y="228" width="1" height="1" fill="#efefef"/><rect x="845" y="137" width="1" height="1" fill="#bebebe"/><rect x="840" y="196" width="1" height="1" fill="#a2a2a2"/><rect x="839" y="121" width="1" height="1" fill="#a2a2a2"/><rect x="840" y="198" width="1" height="1" fill="#acacac"/><rect x="846" y="420" width="1" height="1" fill="#e8e8e8"/><rect x="839" y="428" width="1" height="1" fill="#acacac"/><rect x="845" y="393" width="1" height="1" fill="#bebebe"/><rect x="839" y="256" width="1" height="1" fill="#b6b6b6"/><rect x="848" y="384" width="1" height="1" fill="#bebebe"/><rect x="843" y="60" width="1" height="1" fill="#f4f4f4"/><rect x="841" y="147" width="1" height="1" fill="#a2a2a2"/><rect x="838" y="113" width="1" height="1" fill="#989898"/><rect x="847" y="162" width="1" height="1" fill="#989898"/><rect x="844" y="401" width="1" height="1" fill="#a2a2a2"/><rect x="849" y="54" width="1" height="1" fill="#efefef"/><rect x="843" y="77" width="1" height="1" fill="#a2a2a2"/><rect x="839" y="293" width="1" height="1" fill="#acacac"/><rect x="846" y="263" width="1" height="1" fill="#a2a2a2"/><rect x="840" y="158" width="1" height="1" fill="#989898"/><rect x="840" y="368" width="1" height="1" fill="#f4f4f4"/><rect x="846" y="300" width="1" height="1" fill="#a2a2a2"/><rect x="846" y="225" width="1" height="1" fill="#bebebe"/><rect x="839" y="222" width="1" height="1" fill="#acacac"/><rect x="841" y="418" width="1" height="1" fill="#a2a2a2"/><rect x="842" y="404" width="1" height="1" fill="#efefef"/><rect x="838" y="179" width="1" height="1" fill="#b6b6b6"/><rect x="839" y="66" width="1" height="1" fill="#acacac"/><rect x="846" y="68" width="1" height="1" fill="#bebebe"/><rect x="846" y="229" width="1" height="1" fill="#b6b6b6"/><rect x="838" y="210" width="1" height="1" fill="#f4f4f4"/><rect x="838" y="378" width="1" height="1" fill="#bebebe"/><rect x="846" y="188" width="1" height="1" fill="#989898"/><rect x="843" y="397" width="1" height="1" fill="#bebebe"/><rect x="849" y="411" width="1" height="1" fill="#b6b6b6"/><rect x="844" y="260" width="1" height="1" fill="#e8e8e8"/><rect x="846" y="258" width="1" height="1" fill="#bebebe"/><rect x="840" y="242" width="1" height="1" fill="#bebebe"/><rect x="844" y="117" width="1" height="1" fill="#a2a2a2"/><rect x="841" y="355" width="1" height="1" fill="#989898"/><rect x="842" y="399" width="1" height="1" fill="#f4f4f4"/><rect x="849" y="237" width="1" height="1" fill="#acacac"/><rect x="841" y="383" width="1" height="1" fill="#a2a2a2"/><rect x="839" y="361" width="1" height="1" fill="#a2a2a2"/><rect x="849" y="69" width="1" height="1" fill="#bebebe"/><rect x="849" y="329" width="1" height="1" fill="#e8e8e8"/><rect x="848" y="374" width="1" height="1" fill="#bebebe"/><rect x="846" y="386" width="1" height="1" fill="#b6b6b6"/><rect x="845" y="339" width="1" height="1" fill="#a2a2a2"/><rect x="845" y="426" width="1" height="1" fill="#bebebe"/></svg>
<div style="position:absolute;left:1022px;top:0px;width:2px;height:480px;background:#e4e4e4;"></div>
<div style="position:absolute;left:1022px;top:0px;width:2px;height:13px;background:#b25a4e;"></div>
<div style="position:absolute;left:0px;top:0px;width:1022px;height:38.5px;background:#2c5cd6;"></div>
<div style="position:absolute;left:24.20px;top:11.10px;font-size:15.8px;font-weight:700;line-height:15.8px;color:#fff;white-space:nowrap;transform:scaleX(0.9516);transform-origin:0 0;">PharmaEasePOS</div>
<div style="position:absolute;left:183px;top:15px;width:10px;height:1.7px;background:#fff;"></div>
<div style="position:absolute;left:183px;top:18.2px;width:10px;height:1.7px;background:#fff;"></div>
<div style="position:absolute;left:183px;top:21.3px;width:10px;height:1.7px;background:#fff;"></div>
<div style="position:absolute;left:204px;top:6px;width:28px;height:26px;background:#7596e0;border-radius:3px;"></div>
<svg style="position:absolute;left:212px;top:13px;" width="11" height="11" viewBox="0 0 11 11"><path d="M5.5 1v9M1 5.5h9" stroke="#000" stroke-width="2.4"/></svg>
<svg style="position:absolute;left:456px;top:13px;" width="14" height="13" viewBox="0 0 14 13"><path d="M0.5 1.5h2.5l2.3 7.5h6.5l1.7-5.5H4" fill="none" stroke="#fff" stroke-width="1.8"/><path d="M4 4h9.5l-1.8 5H5.3z" fill="#fff"/><circle cx="5.8" cy="11.5" r="1.3" fill="#fff"/><circle cx="11" cy="11.5" r="1.3" fill="#fff"/></svg>
<div style="position:absolute;left:471.00px;top:14.70px;font-size:10px;font-weight:700;line-height:10px;color:#fff;white-space:nowrap;transform:scaleX(0.8994);transform-origin:0 0;-webkit-text-stroke:0.2px #fff;">POS</div>
<svg style="position:absolute;left:513.3px;top:13.9px;" width="15.3" height="10.1" viewBox="0 0 15.3 10.1"><rect x="0" y="0" width="15.3" height="10.1" fill="#dd4433"/><rect x="1.4" y="1.2" width="12.5" height="7.7" rx="2.8" fill="#3355cc"/><ellipse cx="7.65" cy="5.05" rx="2.1" ry="3" fill="none" stroke="#dd4433" stroke-width="1.1"/><path d="M7.65 3.4v3.3" stroke="#dd4433" stroke-width="0.9"/></svg>
<div style="position:absolute;left:530.50px;top:14.70px;font-size:10px;font-weight:700;line-height:10px;color:#fff;white-space:nowrap;transform:scaleX(0.9478);transform-origin:0 0;-webkit-text-stroke:0.2px #fff;">Mpesa</div>
<svg style="position:absolute;left:582.5px;top:14.5px;" width="11" height="9.5" viewBox="0 0 11 9.5"><path d="M0.3 1h2l1.6 5.3h5.2l1.4-4H3" fill="none" stroke="#fff" stroke-width="1.5"/><path d="M3 2.3h7.7l-1.4 4H4.2z" fill="#fff"/><circle cx="4.6" cy="8.3" r="1" fill="#fff"/><circle cx="8.6" cy="8.3" r="1" fill="#fff"/></svg>
<svg style="position:absolute;left:615px;top:13.5px;" width="16" height="12.5" viewBox="0 0 16 12.5"><path d="M1.2 12.2A7.6 7.6 0 1 1 14.8 12.2z" fill="#f39c12"/><circle cx="4" cy="7" r="1" fill="#2c5cd6"/><circle cx="8" cy="4" r="1" fill="#2c5cd6"/><circle cx="12" cy="7" r="1" fill="#2c5cd6"/><circle cx="5.3" cy="4.6" r="0.8" fill="#2c5cd6"/><circle cx="10.7" cy="4.6" r="0.8" fill="#2c5cd6"/><path d="M8 10.2L9.5 5.2" stroke="#2c5cd6" stroke-width="1.2"/><circle cx="8" cy="10.2" r="1.5" fill="#2c5cd6"/></svg>
<div style="position:absolute;left:632.00px;top:15.00px;font-size:10px;font-weight:700;line-height:10px;color:#fff;white-space:nowrap;transform:scaleX(0.9572);transform-origin:0 0;-webkit-text-stroke:0.2px #fff;">Dashboard</div>
<div style="position:absolute;left:706.00px;top:15.00px;font-size:10px;font-weight:400;line-height:10px;color:#fff;white-space:nowrap;transform:scaleX(0.9693);transform-origin:0 0;">No Maintenance Invoice</div>
<svg style="position:absolute;left:812.5px;top:15.3px;" width="10" height="9" viewBox="0 0 10 9"><path d="M5 0.8L1.2 4.5L5 8.2M1.5 4.5h8" fill="none" stroke="#fff" stroke-width="2.2"/></svg>
<div style="position:absolute;left:820px;top:7px;width:8px;height:8.6px;background:#dd4b39;border-radius:1.5px;"></div>
<div style="position:absolute;left:822.33px;top:8.70px;font-size:6px;font-weight:700;line-height:6px;color:#fff;white-space:nowrap;">0</div>
<div style="position:absolute;left:833.5px;top:0px;width:67px;height:39px;background:#dd4b39;border-radius:0 0 3px 3px;"></div>
<svg style="position:absolute;left:844.5px;top:16.3px;" width="9" height="7.5" viewBox="0 0 9 7.5"><path d="M3.5 0.8H1.2v5.9h2.3" fill="none" stroke="#fff" stroke-width="1.3"/><path d="M3 2.7h2.8V0.6l3 3.15-3 3.15V4.8H3z" fill="#fff"/></svg>
<div style="position:absolute;left:855.60px;top:16.10px;font-size:9px;font-weight:400;line-height:9px;color:#fff;white-space:nowrap;transform:scaleX(0.8365);transform-origin:0 0;">LOGOUT</div>
<svg style="position:absolute;left:911.8px;top:9.8px" width="19" height="19" viewBox="0 0 34 34"><circle cx="17" cy="17" r="17" fill="#fff"/><text x="1" y="28.5" font-family="Liberation Serif" font-weight="700" font-size="33" textLength="12" lengthAdjust="spacingAndGlyphs" fill="#1a1aee">J</text><text x="10.5" y="21.5" font-family="Liberation Serif" font-weight="700" font-size="23" textLength="13.5" lengthAdjust="spacingAndGlyphs" fill="#1a1aee">T</text><ellipse cx="20.8" cy="18.8" rx="14.5" ry="6" transform="rotate(52 20.8 18.8)" fill="none" stroke="#e41010" stroke-width="1.6"/><text x="15.8" y="25.5" font-family="Liberation Serif" font-weight="700" font-size="19.5" textLength="13.5" lengthAdjust="spacingAndGlyphs" fill="#e41010">K</text><circle cx="27" cy="5.5" r="1.1" fill="#e41010"/><circle cx="28.6" cy="8.2" r="1.1" fill="#e41010"/><circle cx="25.5" cy="7.8" r="0.9" fill="#e41010"/><circle cx="27.4" cy="11" r="1.2" fill="#e41010"/></svg>
<div style="position:absolute;left:938.30px;top:15.10px;font-size:10px;font-weight:400;line-height:10px;color:#fff;white-space:nowrap;transform:scaleX(0.9682);transform-origin:0 0;">JohnTech Kenya</div>
<div style="position:absolute;left:0px;top:38.5px;width:172px;height:441.5px;background:#222d32;"></div>
<svg style="position:absolute;left:5.3px;top:45.4px" width="34" height="34" viewBox="0 0 34 34"><circle cx="17" cy="17" r="17" fill="#fff"/><text x="1" y="28.5" font-family="Liberation Serif" font-weight="700" font-size="33" textLength="12" lengthAdjust="spacingAndGlyphs" fill="#1a1aee">J</text><text x="10.5" y="21.5" font-family="Liberation Serif" font-weight="700" font-size="23" textLength="13.5" lengthAdjust="spacingAndGlyphs" fill="#1a1aee">T</text><ellipse cx="20.8" cy="18.8" rx="14.5" ry="6" transform="rotate(52 20.8 18.8)" fill="none" stroke="#e41010" stroke-width="1.6"/><text x="15.8" y="25.5" font-family="Liberation Serif" font-weight="700" font-size="19.5" textLength="13.5" lengthAdjust="spacingAndGlyphs" fill="#e41010">K</text><circle cx="27" cy="5.5" r="1.1" fill="#e41010"/><circle cx="28.6" cy="8.2" r="1.1" fill="#e41010"/><circle cx="25.5" cy="7.8" r="0.9" fill="#e41010"/><circle cx="27.4" cy="11" r="1.2" fill="#e41010"/></svg>
<div style="position:absolute;left:51.00px;top:50.50px;font-size:10px;font-weight:700;line-height:10px;color:#fff;white-space:nowrap;transform:scaleX(0.9208);transform-origin:0 0;">JohnTech Kenya</div>
<div style="position:absolute;left:50.6px;top:68.9px;width:7.4px;height:7.4px;border-radius:50%;background:#3a8c3f"></div>
<div style="position:absolute;left:62.10px;top:68.60px;font-size:8.5px;font-weight:400;line-height:8.5px;color:#fff;white-space:nowrap;transform:scaleX(0.9358);transform-origin:0 0;">Online</div>
<div style="position:absolute;left:0px;top:87px;width:172px;height:28px;background:#1a2226;"></div>
<div style="position:absolute;left:8.80px;top:97.80px;font-size:9px;font-weight:400;line-height:9px;color:#4b646f;white-space:nowrap;transform:scaleX(0.8551);transform-origin:0 0;">ADMINISTRATOR</div>
<svg style="position:absolute;left:10.5px;top:127.5px;" width="12" height="9" viewBox="0 0 12 9"><path d="M0.9 8.8A5.6 5.6 0 1 1 11.1 8.8z" fill="#3362de"/><circle cx="3" cy="5.5" r="0.8" fill="#222d32"/><circle cx="6" cy="2.8" r="0.8" fill="#222d32"/><circle cx="9" cy="5.5" r="0.8" fill="#222d32"/><path d="M6 7.6L7.2 3.8" stroke="#222d32" stroke-width="1"/><circle cx="6" cy="7.6" r="1.1" fill="#222d32"/></svg>
<div style="position:absolute;left:28.60px;top:127.70px;font-size:10px;font-weight:400;line-height:10px;color:#b8c7ce;white-space:nowrap;transform:scaleX(0.9812);transform-origin:0 0;">Dashboard</div>
<svg style="position:absolute;left:11px;top:159.5px;" width="14" height="12" viewBox="0 0 14 12"><path d="M0.3 1h2.3l2.2 7h6.4l1.6-5H3.6" fill="none" stroke="#3362de" stroke-width="1.8"/><path d="M3.8 3h8.8l-1.6 5H5z" fill="#3362de"/><circle cx="5.3" cy="10.6" r="1.3" fill="#3362de"/><circle cx="10.3" cy="10.6" r="1.3" fill="#3362de"/></svg>
<div style="position:absolute;left:28.60px;top:161.40px;font-size:10px;font-weight:400;line-height:10px;color:#b8c7ce;white-space:nowrap;transform:scaleX(0.8899);transform-origin:0 0;">POS</div>
<svg style="position:absolute;left:11px;top:193px;" width="12" height="11" viewBox="0 0 12 11"><path d="M6 0L11.8 2.6V3.6H0.2V2.6z" fill="#3362de"/><rect x="1.2" y="4.3" width="1.8" height="4.6" fill="#3362de"/><rect x="4" y="4.3" width="1.6" height="4.6" fill="#3362de"/><rect x="6.5" y="4.3" width="1.6" height="4.6" fill="#3362de"/><rect x="9" y="4.3" width="1.8" height="4.6" fill="#3362de"/><rect x="0.2" y="9.4" width="11.6" height="1.6" fill="#3362de"/></svg>
<div style="position:absolute;left:28.60px;top:194.40px;font-size:10px;font-weight:400;line-height:10px;color:#b8c7ce;white-space:nowrap;">Creditors</div>
<svg style="position:absolute;left:152.5px;top:195.4px;" width="6" height="8" viewBox="0 0 6 8"><path d="M4.6 0.7L1.4 3.5L4.6 6.3" fill="none" stroke="#b8c7ce" stroke-width="1.3"/></svg>
<svg style="position:absolute;left:11px;top:227px;" width="12" height="10" viewBox="0 0 12 10"><rect x="0" y="0.3" width="2" height="1.7" fill="#3362de"/><rect x="2.8" y="0.3" width="8.7" height="1.7" fill="#3362de"/><rect x="0" y="2.8" width="2" height="1.7" fill="#3362de"/><rect x="2.8" y="2.8" width="8.7" height="1.7" fill="#3362de"/><rect x="0" y="5.3" width="2" height="1.7" fill="#3362de"/><rect x="2.8" y="5.3" width="8.7" height="1.7" fill="#3362de"/><rect x="0" y="7.8" width="2" height="1.7" fill="#3362de"/><rect x="2.8" y="7.8" width="8.7" height="1.7" fill="#3362de"/></svg>
<div style="position:absolute;left:28.60px;top:228.10px;font-size:10px;font-weight:400;line-height:10px;color:#b8c7ce;white-space:nowrap;transform:scaleX(0.9609);transform-origin:0 0;">Purchase</div>
<svg style="position:absolute;left:152.5px;top:229.1px;" width="6" height="8" viewBox="0 0 6 8"><path d="M4.6 0.7L1.4 3.5L4.6 6.3" fill="none" stroke="#b8c7ce" stroke-width="1.3"/></svg>
<div style="position:absolute;left:0px;top:248.3px;width:172px;height:33.2px;background:#1e282c;"></div>
<svg style="position:absolute;left:11px;top:259.5px;" width="11" height="11" viewBox="0 0 11 11"><rect x="0.5" y="1.5" width="10" height="9" fill="none" stroke="#3362de" stroke-width="1"/><rect x="0.5" y="1.5" width="10" height="2.2" fill="#3362de"/><path d="M3 0v2.5M8 0v2.5" stroke="#3362de" stroke-width="1.2"/><path d="M0.5 5.8h10M0.5 8h10M3 3.7v7M5.5 3.7v7M8 3.7v7" stroke="#3362de" stroke-width="0.7"/></svg>
<div style="position:absolute;left:28.60px;top:260.90px;font-size:10px;font-weight:400;line-height:10px;color:#fff;white-space:nowrap;transform:scaleX(0.9914);transform-origin:0 0;-webkit-text-stroke:0.35px #fff;">Stock</div>
<svg style="position:absolute;left:152px;top:262px;" width="8" height="6" viewBox="0 0 8 6"><path d="M0.8 1L3.8 4.3L6.8 1" fill="none" stroke="#fff" stroke-width="1.4"/></svg>
<div style="position:absolute;left:0px;top:281.5px;width:172px;height:90.5px;background:#2c3b41;"></div>
<svg style="position:absolute;left:13px;top:288.3px;" width="12" height="10" viewBox="0 0 12 10"><path d="M0.6 0v9.4h11.4" fill="none" stroke="#3362de" stroke-width="1.2"/><rect x="2.4" y="5" width="1.7" height="4" fill="#3362de"/><rect x="4.7" y="2.5" width="1.7" height="6.5" fill="#3362de"/><rect x="7" y="4" width="1.7" height="5" fill="#3362de"/><rect x="9.3" y="1" width="1.7" height="8" fill="#3362de"/></svg>
<div style="position:absolute;left:28.80px;top:289.00px;font-size:10px;font-weight:400;line-height:10px;color:#fff;white-space:nowrap;transform:scaleX(1.0040);transform-origin:0 0;-webkit-text-stroke:0.35px #fff;">Stock Inventory</div>
<svg style="position:absolute;left:13px;top:311.3px;" width="12" height="10" viewBox="0 0 12 10"><path d="M0.6 0v9.4h11.4" fill="none" stroke="#3362de" stroke-width="1.2"/><rect x="2.4" y="5" width="1.7" height="4" fill="#3362de"/><rect x="4.7" y="2.5" width="1.7" height="6.5" fill="#3362de"/><rect x="7" y="4" width="1.7" height="5" fill="#3362de"/><rect x="9.3" y="1" width="1.7" height="8" fill="#3362de"/></svg>
<div style="position:absolute;left:29.20px;top:312.00px;font-size:10px;font-weight:400;line-height:10px;color:#8aa4af;white-space:nowrap;transform:scaleX(0.9718);transform-origin:0 0;">Track Report</div>
<svg style="position:absolute;left:13px;top:333.5px;" width="12" height="10" viewBox="0 0 12 10"><path d="M6 0.3L11.8 9.8H0.2z" fill="#3362de"/><path d="M6 3.5v3.3" stroke="#2c3b41" stroke-width="1.2"/><circle cx="6" cy="8.2" r="0.7" fill="#2c3b41"/></svg>
<div style="position:absolute;left:29.20px;top:334.50px;font-size:10px;font-weight:400;line-height:10px;color:#8aa4af;white-space:nowrap;transform:scaleX(0.9893);transform-origin:0 0;">Stock Alert</div>
<svg style="position:absolute;left:13px;top:356.7px;" width="12" height="10" viewBox="0 0 12 10"><path d="M0.6 0v9.4h11.4" fill="none" stroke="#3362de" stroke-width="1.2"/><rect x="2.4" y="5" width="1.7" height="4" fill="#3362de"/><rect x="4.7" y="2.5" width="1.7" height="6.5" fill="#3362de"/><rect x="7" y="4" width="1.7" height="5" fill="#3362de"/><rect x="9.3" y="1" width="1.7" height="8" fill="#3362de"/></svg>
<div style="position:absolute;left:29.20px;top:357.40px;font-size:10px;font-weight:400;line-height:10px;color:#8aa4af;white-space:nowrap;transform:scaleX(0.9822);transform-origin:0 0;">Expiry Report</div>
<svg style="position:absolute;left:10.5px;top:383.5px;" width="15" height="12" viewBox="0 0 15 12"><path d="M7.5 0.19999999999999973l3 1.3v3.4l-3 1.5-3-1.5V1.5z" fill="#3362de"/><path d="M4.5 1.5l3 1.3 3-1.3M7.5 2.8v3.6" fill="none" stroke="#222d32" stroke-width="0.6"/><path d="M4 5.2l3 1.3v3.4l-3 1.5-3-1.5V6.5z" fill="#3362de"/><path d="M1 6.5l3 1.3 3-1.3M4 7.800000000000001v3.6" fill="none" stroke="#222d32" stroke-width="0.6"/><path d="M11 5.2l3 1.3v3.4l-3 1.5-3-1.5V6.5z" fill="#3362de"/><path d="M8 6.5l3 1.3 3-1.3M11 7.800000000000001v3.6" fill="none" stroke="#222d32" stroke-width="0.6"/></svg>
<div style="position:absolute;left:28.60px;top:385.40px;font-size:10px;font-weight:400;line-height:10px;color:#b8c7ce;white-space:nowrap;">Products Info</div>
<svg style="position:absolute;left:152.5px;top:386.4px;" width="6" height="8" viewBox="0 0 6 8"><path d="M4.6 0.7L1.4 3.5L4.6 6.3" fill="none" stroke="#b8c7ce" stroke-width="1.3"/></svg>
<svg style="position:absolute;left:11px;top:418.5px;" width="12" height="9" viewBox="0 0 12 9"><rect x="0" y="0" width="12" height="9" fill="#3362de"/><rect x="2.2" y="1.6" width="7.6" height="5.8" rx="2.5" fill="#222d32"/><ellipse cx="6" cy="4.5" rx="1.6" ry="2.1" fill="none" stroke="#3362de" stroke-width="1"/></svg>
<div style="position:absolute;left:28.60px;top:418.10px;font-size:10px;font-weight:400;line-height:10px;color:#b8c7ce;white-space:nowrap;transform:scaleX(0.8995);transform-origin:0 0;">Mpesa</div>
<svg style="position:absolute;left:152.5px;top:419.1px;" width="6" height="8" viewBox="0 0 6 8"><path d="M4.6 0.7L1.4 3.5L4.6 6.3" fill="none" stroke="#b8c7ce" stroke-width="1.3"/></svg>
<svg style="position:absolute;left:11px;top:451px;" width="10" height="10" viewBox="0 0 10 10"><circle cx="5" cy="5" r="4.8" fill="#3362de"/><rect x="2.3" y="4.2" width="5.4" height="1.6" fill="#222d32"/></svg>
<div style="position:absolute;left:28.60px;top:451.30px;font-size:10px;font-weight:400;line-height:10px;color:#b8c7ce;white-space:nowrap;transform:scaleX(0.9831);transform-origin:0 0;">Suppliers</div>
<svg style="position:absolute;left:152.5px;top:452.3px;" width="6" height="8" viewBox="0 0 6 8"><path d="M4.6 0.7L1.4 3.5L4.6 6.3" fill="none" stroke="#b8c7ce" stroke-width="1.3"/></svg>
<div style="position:absolute;left:187px;top:54.3px;width:25.6px;height:14.4px;border:1.1px solid #56616d;border-radius:8px;"></div>
<svg style="position:absolute;left:192.5px;top:56.5px;" width="11" height="12" viewBox="0 0 11 12"><path d="M5.5 1.5L1.5 6L5.5 10.5M2 6h8.5" fill="none" stroke="#3d70ea" stroke-width="2.3" stroke-linejoin="round" stroke-linecap="round"/></svg>
<div style="position:absolute;left:219.30px;top:53.00px;font-size:17px;font-weight:400;line-height:17px;color:#333;white-space:nowrap;">Stock Inventory</div>
<div style="position:absolute;left:344.00px;top:58.00px;font-size:10.5px;font-weight:400;line-height:10.5px;color:#808080;white-space:nowrap;transform:scaleX(0.9682);transform-origin:0 0;">Add/ Purchase</div>
<svg style="position:absolute;left:800px;top:59.3px;" width="10" height="8" viewBox="0 0 10 8"><path d="M1.05 7.8A4.9 4.9 0 1 1 8.95 7.8z" fill="#4a4a4a"/><circle cx="2.8" cy="4.6" r="0.65" fill="#d9d9d9"/><circle cx="5" cy="2.3" r="0.65" fill="#d9d9d9"/><circle cx="7.2" cy="4.6" r="0.65" fill="#d9d9d9"/><path d="M5 6.6L6 3.6" stroke="#d9d9d9" stroke-width="0.8"/><circle cx="5" cy="6.6" r="1" fill="#d9d9d9"/></svg>
<div style="position:absolute;left:815.00px;top:58.20px;font-size:9.5px;font-weight:400;line-height:9.5px;color:#505050;white-space:nowrap;transform:scaleX(0.8917);transform-origin:0 0;">Home</div>
<div style="position:absolute;left:854.00px;top:58.20px;font-size:9.5px;font-weight:400;line-height:9.5px;color:#505050;white-space:nowrap;transform:scaleX(0.8741);transform-origin:0 0;">Stock List</div>
<div style="position:absolute;left:905.70px;top:58.20px;font-size:9.5px;font-weight:400;line-height:9.5px;color:#505050;white-space:nowrap;transform:scaleX(0.8660);transform-origin:0 0;">New Purchase</div>
<div style="position:absolute;left:975.40px;top:58.20px;font-size:9.5px;font-weight:400;line-height:9.5px;color:#777;white-space:nowrap;transform:scaleX(0.8670);transform-origin:0 0;">Purchase</div>
<div style="position:absolute;left:183px;top:82px;width:827px;height:400px;background:#fff;"></div>
<div style="position:absolute;left:183px;top:82px;width:827px;height:2px;background:#00a65a;border-radius:2px 2px 0 0;"></div>
<div style="position:absolute;left:190.80px;top:97.20px;font-size:10px;font-weight:400;line-height:10px;color:#333;white-space:nowrap;transform:scaleX(0.9674);transform-origin:0 0;">Show</div>
<div style="position:absolute;left:217px;top:91.6px;width:55.5px;height:20.5px;border:1px solid #d2d6de;background:#fff"></div>
<div style="position:absolute;left:229.00px;top:99.60px;font-size:9px;font-weight:400;line-height:9px;color:#444;white-space:nowrap;transform:scaleX(0.8877);transform-origin:0 0;">1,000</div>
<svg style="position:absolute;left:263.5px;top:100.5px;" width="8" height="6" viewBox="0 0 8 6"><path d="M0.8 1L3.8 4.3L6.8 1" fill="none" stroke="#333" stroke-width="1.5"/></svg>
<div style="position:absolute;left:276.80px;top:97.30px;font-size:10px;font-weight:400;line-height:10px;color:#333;white-space:nowrap;transform:scaleX(0.9961);transform-origin:0 0;">entries</div>
<div style="position:absolute;left:569.60px;top:99.60px;font-size:10px;font-weight:400;line-height:10px;color:#555;white-space:nowrap;transform:scaleX(0.9410);transform-origin:0 0;">Processing...</div>
<div style="position:absolute;left:689px;top:92px;width:157px;height:17px;border-style:solid;border-width:1.2px 1.8px 1.8px 1.2px;border-color:#4a4a4a #0a0a0a #0a0a0a #4a4a4a;background:#6d8fe0"></div>
<svg style="position:absolute;left:695px;top:96.2px;" width="10" height="9" viewBox="0 0 10 9"><path d="M3.8 0h2.4v3.6h2.2L5 7 1.6 3.6h2.2z" fill="#111"/><path d="M0 6.2h2.2L5 8.2l2.8-2h2.2V9H0z" fill="#111"/></svg>
<div style="position:absolute;left:707.70px;top:97.40px;font-size:10px;font-weight:400;line-height:10px;color:#1d2233;white-space:nowrap;transform:scaleX(0.9615);transform-origin:0 0;">Download Stock Report (Excel)</div>
<div style="position:absolute;left:848.40px;top:97.30px;font-size:10px;font-weight:400;line-height:10px;color:#333;white-space:nowrap;transform:scaleX(0.9400);transform-origin:0 0;">Search:</div>
<div style="position:absolute;left:885px;top:91.6px;width:116.5px;height:20.5px;border:1px solid #d2d6de;background:#fff"></div>
<div style="position:absolute;left:191px;top:123px;width:794.3px;height:23px;background:#2c5cd6;"></div>
<div style="position:absolute;left:985.3px;top:122.5px;width:17px;height:1px;background:#f4f4f4;"></div>
<div style="position:absolute;left:195.60px;top:130.70px;font-size:10px;font-weight:700;line-height:10px;color:#fff;white-space:nowrap;transform:scaleX(0.9872);transform-origin:0 0;-webkit-text-stroke:0.2px #fff;">Item</div>
<svg style="position:absolute;left:424.3px;top:129.8px;opacity:0.28;" width="12" height="11.5" viewBox="0 0 12 11.5"><path d="M1.5 0h2.5v8.2h1.6L2.75 11.3L-0.1 8.2h1.6z" fill="#fff"/><path d="M7.1 11.3h2.6V3.3h1.6L8.4 0.3L5.5 3.3h1.6z" fill="#fff"/></svg>
<div style="position:absolute;left:438.9px;top:123px;width:1px;height:23px;background:rgba(255,255,255,0.75);"></div>
<div style="position:absolute;left:444.00px;top:130.70px;font-size:10px;font-weight:700;line-height:10px;color:#fff;white-space:nowrap;transform:scaleX(0.9297);transform-origin:0 0;-webkit-text-stroke:0.2px #fff;">Qty</div>
<svg style="position:absolute;left:491.3px;top:129.8px;opacity:0.28;" width="12" height="11.5" viewBox="0 0 12 11.5"><path d="M1.5 0h2.5v8.2h1.6L2.75 11.3L-0.1 8.2h1.6z" fill="#fff"/><path d="M7.1 11.3h2.6V3.3h1.6L8.4 0.3L5.5 3.3h1.6z" fill="#fff"/></svg>
<div style="position:absolute;left:505.9px;top:123px;width:1px;height:23px;background:rgba(255,255,255,0.75);"></div>
<div style="position:absolute;left:511.00px;top:130.70px;font-size:10px;font-weight:700;line-height:10px;color:#fff;white-space:nowrap;transform:scaleX(0.9323);transform-origin:0 0;-webkit-text-stroke:0.2px #fff;">Buying Price</div>
<svg style="position:absolute;left:590.4px;top:129.8px;opacity:0.28;" width="12" height="11.5" viewBox="0 0 12 11.5"><path d="M1.5 0h2.5v8.2h1.6L2.75 11.3L-0.1 8.2h1.6z" fill="#fff"/><path d="M7.1 11.3h2.6V3.3h1.6L8.4 0.3L5.5 3.3h1.6z" fill="#fff"/></svg>
<div style="position:absolute;left:605.0px;top:123px;width:1px;height:23px;background:rgba(255,255,255,0.75);"></div>
<div style="position:absolute;left:610.10px;top:130.70px;font-size:10px;font-weight:700;line-height:10px;color:#fff;white-space:nowrap;transform:scaleX(0.9733);transform-origin:0 0;-webkit-text-stroke:0.2px #fff;">Bp*Qty</div>
<svg style="position:absolute;left:664.3px;top:129.8px;opacity:0.28;" width="12" height="11.5" viewBox="0 0 12 11.5"><path d="M1.5 0h2.5v8.2h1.6L2.75 11.3L-0.1 8.2h1.6z" fill="#fff"/><path d="M7.1 11.3h2.6V3.3h1.6L8.4 0.3L5.5 3.3h1.6z" fill="#fff"/></svg>
<div style="position:absolute;left:678.9px;top:123px;width:1px;height:23px;background:rgba(255,255,255,0.75);"></div>
<div style="position:absolute;left:684.00px;top:130.70px;font-size:10px;font-weight:700;line-height:10px;color:#fff;white-space:nowrap;transform:scaleX(0.9284);transform-origin:0 0;-webkit-text-stroke:0.2px #fff;">Sell P</div>
<svg style="position:absolute;left:794.5px;top:129.8px;opacity:0.28;" width="12" height="11.5" viewBox="0 0 12 11.5"><path d="M1.5 0h2.5v8.2h1.6L2.75 11.3L-0.1 8.2h1.6z" fill="#fff"/><path d="M7.1 11.3h2.6V3.3h1.6L8.4 0.3L5.5 3.3h1.6z" fill="#fff"/></svg>
<div style="position:absolute;left:809.1px;top:123px;width:1px;height:23px;background:rgba(255,255,255,0.75);"></div>
<div style="position:absolute;left:814.20px;top:130.70px;font-size:10px;font-weight:700;line-height:10px;color:#fff;white-space:nowrap;transform:scaleX(0.9484);transform-origin:0 0;-webkit-text-stroke:0.2px #fff;">Expiry</div>
<svg style="position:absolute;left:883.1999999999999px;top:129.8px;opacity:0.28;" width="12" height="11.5" viewBox="0 0 12 11.5"><path d="M1.5 0h2.5v8.2h1.6L2.75 11.3L-0.1 8.2h1.6z" fill="#fff"/><path d="M7.1 11.3h2.6V3.3h1.6L8.4 0.3L5.5 3.3h1.6z" fill="#fff"/></svg>
<div style="position:absolute;left:897.8px;top:123px;width:1px;height:23px;background:rgba(255,255,255,0.75);"></div>
<div style="position:absolute;left:902.90px;top:130.70px;font-size:10px;font-weight:700;line-height:10px;color:#fff;white-space:nowrap;transform:scaleX(0.9451);transform-origin:0 0;-webkit-text-stroke:0.2px #fff;">Action</div>
<svg style="position:absolute;left:970.1999999999999px;top:129.8px;opacity:0.28;" width="12" height="11.5" viewBox="0 0 12 11.5"><path d="M1.5 0h2.5v8.2h1.6L2.75 11.3L-0.1 8.2h1.6z" fill="#fff"/><path d="M7.1 11.3h2.6V3.3h1.6L8.4 0.3L5.5 3.3h1.6z" fill="#fff"/></svg>
<div style="position:absolute;left:191px;top:146px;width:794.3px;height:2.3px;background:#eef0f4;"></div>
<div style="position:absolute;left:191px;top:173.3px;width:794.3px;height:1px;background:#f2f2f2;"></div>
<div style="position:absolute;left:191px;top:198.76000000000002px;width:794.3px;height:1px;background:#f2f2f2;"></div>
<div style="position:absolute;left:191px;top:224.22000000000003px;width:794.3px;height:1px;background:#f2f2f2;"></div>
<div style="position:absolute;left:191px;top:249.68px;width:794.3px;height:1px;background:#f2f2f2;"></div>
<div style="position:absolute;left:191px;top:275.14px;width:794.3px;height:1px;background:#f2f2f2;"></div>
<div style="position:absolute;left:191px;top:300.6px;width:794.3px;height:1px;background:#f2f2f2;"></div>
<div style="position:absolute;left:191px;top:326.06px;width:794.3px;height:1px;background:#f2f2f2;"></div>
<div style="position:absolute;left:191px;top:351.52px;width:794.3px;height:1px;background:#f2f2f2;"></div>
<div style="position:absolute;left:191px;top:376.98px;width:794.3px;height:1px;background:#f2f2f2;"></div>
<div style="position:absolute;left:191px;top:402.44000000000005px;width:794.3px;height:1px;background:#f2f2f2;"></div>
<div style="position:absolute;left:191px;top:427.90000000000003px;width:794.3px;height:1px;background:#f2f2f2;"></div>
<div style="position:absolute;left:191px;top:453.36px;width:794.3px;height:1px;background:#f2f2f2;"></div>
<div style="position:absolute;left:191px;top:478.82px;width:794.3px;height:1px;background:#f2f2f2;"></div>
<div style="position:absolute;left:438.9px;top:146px;width:1px;height:334px;background:#f2f2f2;"></div>
<div style="position:absolute;left:505.9px;top:146px;width:1px;height:334px;background:#f2f2f2;"></div>
<div style="position:absolute;left:605.0px;top:146px;width:1px;height:334px;background:#f2f2f2;"></div>
<div style="position:absolute;left:678.9px;top:146px;width:1px;height:334px;background:#f2f2f2;"></div>
<div style="position:absolute;left:809.1px;top:146px;width:1px;height:334px;background:#f2f2f2;"></div>
<div style="position:absolute;left:897.8px;top:146px;width:1px;height:334px;background:#f2f2f2;"></div>
<div style="position:absolute;left:190.5px;top:146px;width:1px;height:334px;background:#f2f2f2;"></div>
<div style="position:absolute;left:195.50px;top:155.50px;font-size:10px;font-weight:400;line-height:10px;color:#333;white-space:nowrap;">Nifediphine[calcigar ed retared ]</div>
<div style="position:absolute;left:443.60px;top:155.50px;font-size:10px;font-weight:400;line-height:10px;color:#333;white-space:nowrap;transform:scaleX(0.9500);transform-origin:0 0;">613</div>
<div style="position:absolute;left:511.20px;top:155.50px;font-size:10px;font-weight:400;line-height:10px;color:#333;white-space:nowrap;transform:scaleX(0.9550);transform-origin:0 0;">1.00</div>
<div style="position:absolute;left:610.00px;top:155.50px;font-size:10px;font-weight:400;line-height:10px;color:#333;white-space:nowrap;transform:scaleX(0.9550);transform-origin:0 0;">613.00</div>
<div style="position:absolute;left:683.80px;top:155.50px;font-size:10px;font-weight:400;line-height:10px;color:#333;white-space:nowrap;transform:scaleX(0.9550);transform-origin:0 0;">5</div>
<div style="position:absolute;left:814.00px;top:155.50px;font-size:10px;font-weight:400;line-height:10px;color:#333;white-space:nowrap;transform:scaleX(0.9400);transform-origin:0 0;">Apr 30, 2026</div>
<div style="position:absolute;left:903px;top:153.4px;width:24px;height:16.5px;background:#00c0ef;border-radius:2px;"></div>
<div style="position:absolute;left:907.50px;top:157.50px;font-size:8.5px;font-weight:400;line-height:8.5px;color:#fff;white-space:nowrap;transform:scaleX(1.0235);transform-origin:0 0;-webkit-text-stroke:0.15px #fff;">Edit</div>
<div style="position:absolute;left:928.9px;top:153.4px;width:33px;height:16.5px;background:#dd4b39;border-radius:2px;"></div>
<div style="position:absolute;left:934.00px;top:157.50px;font-size:8.5px;font-weight:400;line-height:8.5px;color:#fff;white-space:nowrap;transform:scaleX(0.9480);transform-origin:0 0;-webkit-text-stroke:0.15px #fff;">Delete</div>
<div style="position:absolute;left:195.50px;top:181.96px;font-size:10px;font-weight:400;line-height:10px;color:#333;white-space:nowrap;transform:scaleX(1.0147);transform-origin:0 0;">amlodiphine 10 mg[varinil ]</div>
<div style="position:absolute;left:443.60px;top:181.96px;font-size:10px;font-weight:400;line-height:10px;color:#333;white-space:nowrap;transform:scaleX(0.9500);transform-origin:0 0;">87</div>
<div style="position:absolute;left:511.20px;top:181.96px;font-size:10px;font-weight:400;line-height:10px;color:#333;white-space:nowrap;transform:scaleX(0.9550);transform-origin:0 0;">2.00</div>
<div style="position:absolute;left:610.00px;top:181.96px;font-size:10px;font-weight:400;line-height:10px;color:#333;white-space:nowrap;transform:scaleX(0.9550);transform-origin:0 0;">174.00</div>
<div style="position:absolute;left:683.80px;top:181.96px;font-size:10px;font-weight:400;line-height:10px;color:#333;white-space:nowrap;transform:scaleX(0.9550);transform-origin:0 0;">10</div>
<div style="position:absolute;left:814.00px;top:181.96px;font-size:10px;font-weight:400;line-height:10px;color:#333;white-space:nowrap;transform:scaleX(0.9400);transform-origin:0 0;">May 07, 2025</div>
<div style="position:absolute;left:903px;top:178.56000000000003px;width:24px;height:16.5px;background:#00c0ef;border-radius:2px;"></div>
<div style="position:absolute;left:907.50px;top:182.66px;font-size:8.5px;font-weight:400;line-height:8.5px;color:#fff;white-space:nowrap;transform:scaleX(1.0235);transform-origin:0 0;-webkit-text-stroke:0.15px #fff;">Edit</div>
<div style="position:absolute;left:928.9px;top:178.56000000000003px;width:33px;height:16.5px;background:#dd4b39;border-radius:2px;"></div>
<div style="position:absolute;left:934.00px;top:182.66px;font-size:8.5px;font-weight:400;line-height:8.5px;color:#fff;white-space:nowrap;transform:scaleX(0.9480);transform-origin:0 0;-webkit-text-stroke:0.15px #fff;">Delete</div>
<div style="position:absolute;left:195.50px;top:207.42px;font-size:10px;font-weight:400;line-height:10px;color:#333;white-space:nowrap;transform:scaleX(0.9504);transform-origin:0 0;">Amlozaar H TAB</div>
<div style="position:absolute;left:443.5px;top:205.02px;width:13.5px;height:14.6px;background:#dd4b39;border-radius:2px;"></div>
<div style="position:absolute;left:448.16px;top:208.22px;font-size:7.5px;font-weight:700;line-height:7.5px;color:#fff;white-space:nowrap;">0</div>
<div style="position:absolute;left:511.20px;top:207.42px;font-size:10px;font-weight:400;line-height:10px;color:#333;white-space:nowrap;transform:scaleX(0.9550);transform-origin:0 0;">32.00</div>
<div style="position:absolute;left:610.00px;top:207.42px;font-size:10px;font-weight:400;line-height:10px;color:#333;white-space:nowrap;transform:scaleX(0.9550);transform-origin:0 0;">0.00</div>
<div style="position:absolute;left:683.80px;top:207.42px;font-size:10px;font-weight:400;line-height:10px;color:#333;white-space:nowrap;transform:scaleX(0.9550);transform-origin:0 0;">80</div>
<div style="position:absolute;left:814.00px;top:207.42px;font-size:10px;font-weight:400;line-height:10px;color:#333;white-space:nowrap;transform:scaleX(0.9400);transform-origin:0 0;">May 14, 2025</div>
<div style="position:absolute;left:903px;top:204.02000000000004px;width:24px;height:16.5px;background:#00c0ef;border-radius:2px;"></div>
<div style="position:absolute;left:907.50px;top:208.12px;font-size:8.5px;font-weight:400;line-height:8.5px;color:#fff;white-space:nowrap;transform:scaleX(1.0235);transform-origin:0 0;-webkit-text-stroke:0.15px #fff;">Edit</div>
<div style="position:absolute;left:928.9px;top:204.02000000000004px;width:33px;height:16.5px;background:#dd4b39;border-radius:2px;"></div>
<div style="position:absolute;left:934.00px;top:208.12px;font-size:8.5px;font-weight:400;line-height:8.5px;color:#fff;white-space:nowrap;transform:scaleX(0.9480);transform-origin:0 0;-webkit-text-stroke:0.15px #fff;">Delete</div>
<div style="position:absolute;left:195.50px;top:232.88px;font-size:10px;font-weight:400;line-height:10px;color:#333;white-space:nowrap;transform:scaleX(0.9283);transform-origin:0 0;">AMOXICILIN CLAVULLIN 228 susp[Finemox ]</div>
<div style="position:absolute;left:443.5px;top:230.48px;width:13.5px;height:14.6px;background:#f39c12;border-radius:2px;"></div>
<div style="position:absolute;left:448.16px;top:233.68px;font-size:7.5px;font-weight:700;line-height:7.5px;color:#fff;white-space:nowrap;">1</div>
<div style="position:absolute;left:511.20px;top:232.88px;font-size:10px;font-weight:400;line-height:10px;color:#333;white-space:nowrap;transform:scaleX(0.9550);transform-origin:0 0;">120.00</div>
<div style="position:absolute;left:610.00px;top:232.88px;font-size:10px;font-weight:400;line-height:10px;color:#333;white-space:nowrap;transform:scaleX(0.9550);transform-origin:0 0;">120.00</div>
<div style="position:absolute;left:683.80px;top:232.88px;font-size:10px;font-weight:400;line-height:10px;color:#333;white-space:nowrap;transform:scaleX(0.9550);transform-origin:0 0;">350</div>
<div style="position:absolute;left:814.00px;top:232.88px;font-size:10px;font-weight:400;line-height:10px;color:#333;white-space:nowrap;transform:scaleX(0.9400);transform-origin:0 0;">May 26, 2025</div>
<div style="position:absolute;left:903px;top:229.48000000000002px;width:24px;height:16.5px;background:#00c0ef;border-radius:2px;"></div>
<div style="position:absolute;left:907.50px;top:233.58px;font-size:8.5px;font-weight:400;line-height:8.5px;color:#fff;white-space:nowrap;transform:scaleX(1.0235);transform-origin:0 0;-webkit-text-stroke:0.15px #fff;">Edit</div>
<div style="position:absolute;left:928.9px;top:229.48000000000002px;width:33px;height:16.5px;background:#dd4b39;border-radius:2px;"></div>
<div style="position:absolute;left:934.00px;top:233.58px;font-size:8.5px;font-weight:400;line-height:8.5px;color:#fff;white-space:nowrap;transform:scaleX(0.9480);transform-origin:0 0;-webkit-text-stroke:0.15px #fff;">Delete</div>
<div style="position:absolute;left:195.50px;top:258.34px;font-size:10px;font-weight:400;line-height:10px;color:#333;white-space:nowrap;transform:scaleX(0.9026);transform-origin:0 0;">AMOXICILIN CLAVULLIN 457 [ACINE T]</div>
<div style="position:absolute;left:443.5px;top:255.94px;width:13.5px;height:14.6px;background:#f39c12;border-radius:2px;"></div>
<div style="position:absolute;left:448.16px;top:259.14px;font-size:7.5px;font-weight:700;line-height:7.5px;color:#fff;white-space:nowrap;">2</div>
<div style="position:absolute;left:511.20px;top:258.34px;font-size:10px;font-weight:400;line-height:10px;color:#333;white-space:nowrap;transform:scaleX(0.9550);transform-origin:0 0;">240.00</div>
<div style="position:absolute;left:610.00px;top:258.34px;font-size:10px;font-weight:400;line-height:10px;color:#333;white-space:nowrap;transform:scaleX(0.9550);transform-origin:0 0;">480.00</div>
<div style="position:absolute;left:683.80px;top:258.34px;font-size:10px;font-weight:400;line-height:10px;color:#333;white-space:nowrap;transform:scaleX(0.9550);transform-origin:0 0;">450</div>
<div style="position:absolute;left:814.00px;top:258.34px;font-size:10px;font-weight:400;line-height:10px;color:#333;white-space:nowrap;transform:scaleX(0.9400);transform-origin:0 0;">May 27, 2026</div>
<div style="position:absolute;left:903px;top:254.94px;width:24px;height:16.5px;background:#00c0ef;border-radius:2px;"></div>
<div style="position:absolute;left:907.50px;top:259.04px;font-size:8.5px;font-weight:400;line-height:8.5px;color:#fff;white-space:nowrap;transform:scaleX(1.0235);transform-origin:0 0;-webkit-text-stroke:0.15px #fff;">Edit</div>
<div style="position:absolute;left:928.9px;top:254.94px;width:33px;height:16.5px;background:#dd4b39;border-radius:2px;"></div>
<div style="position:absolute;left:934.00px;top:259.04px;font-size:8.5px;font-weight:400;line-height:8.5px;color:#fff;white-space:nowrap;transform:scaleX(0.9480);transform-origin:0 0;-webkit-text-stroke:0.15px #fff;">Delete</div>
<div style="position:absolute;left:195.50px;top:283.80px;font-size:10px;font-weight:400;line-height:10px;color:#333;white-space:nowrap;transform:scaleX(0.9322);transform-origin:0 0;">AMOXICILIN CLAVULLIN 228 [kamoxclav]</div>
<div style="position:absolute;left:443.5px;top:281.40000000000003px;width:13.5px;height:14.6px;background:#f39c12;border-radius:2px;"></div>
<div style="position:absolute;left:448.16px;top:284.60px;font-size:7.5px;font-weight:700;line-height:7.5px;color:#fff;white-space:nowrap;">2</div>
<div style="position:absolute;left:511.20px;top:283.80px;font-size:10px;font-weight:400;line-height:10px;color:#333;white-space:nowrap;transform:scaleX(0.9550);transform-origin:0 0;">112.00</div>
<div style="position:absolute;left:610.00px;top:283.80px;font-size:10px;font-weight:400;line-height:10px;color:#333;white-space:nowrap;transform:scaleX(0.9550);transform-origin:0 0;">224.00</div>
<div style="position:absolute;left:683.80px;top:283.80px;font-size:10px;font-weight:400;line-height:10px;color:#333;white-space:nowrap;transform:scaleX(0.9550);transform-origin:0 0;">250</div>
<div style="position:absolute;left:814.00px;top:283.80px;font-size:10px;font-weight:400;line-height:10px;color:#333;white-space:nowrap;transform:scaleX(0.9400);transform-origin:0 0;">May 06, 2025</div>
<div style="position:absolute;left:903px;top:280.40000000000003px;width:24px;height:16.5px;background:#00c0ef;border-radius:2px;"></div>
<div style="position:absolute;left:907.50px;top:284.50px;font-size:8.5px;font-weight:400;line-height:8.5px;color:#fff;white-space:nowrap;transform:scaleX(1.0235);transform-origin:0 0;-webkit-text-stroke:0.15px #fff;">Edit</div>
<div style="position:absolute;left:928.9px;top:280.40000000000003px;width:33px;height:16.5px;background:#dd4b39;border-radius:2px;"></div>
<div style="position:absolute;left:934.00px;top:284.50px;font-size:8.5px;font-weight:400;line-height:8.5px;color:#fff;white-space:nowrap;transform:scaleX(0.9480);transform-origin:0 0;-webkit-text-stroke:0.15px #fff;">Delete</div>
<div style="position:absolute;left:195.50px;top:309.26px;font-size:10px;font-weight:400;line-height:10px;color:#333;white-space:nowrap;transform:scaleX(0.9019);transform-origin:0 0;">AMOXICILIN CLAVULLIN 228.5 [ACINE T]</div>
<div style="position:absolute;left:443.5px;top:306.86px;width:13.5px;height:14.6px;background:#f39c12;border-radius:2px;"></div>
<div style="position:absolute;left:448.16px;top:310.06px;font-size:7.5px;font-weight:700;line-height:7.5px;color:#fff;white-space:nowrap;">1</div>
<div style="position:absolute;left:511.20px;top:309.26px;font-size:10px;font-weight:400;line-height:10px;color:#333;white-space:nowrap;transform:scaleX(0.9550);transform-origin:0 0;">132.00</div>
<div style="position:absolute;left:610.00px;top:309.26px;font-size:10px;font-weight:400;line-height:10px;color:#333;white-space:nowrap;transform:scaleX(0.9550);transform-origin:0 0;">132.00</div>
<div style="position:absolute;left:683.80px;top:309.26px;font-size:10px;font-weight:400;line-height:10px;color:#333;white-space:nowrap;transform:scaleX(0.9550);transform-origin:0 0;">350</div>
<div style="position:absolute;left:814.00px;top:309.26px;font-size:10px;font-weight:400;line-height:10px;color:#333;white-space:nowrap;transform:scaleX(0.9400);transform-origin:0 0;">May 12, 2025</div>
<div style="position:absolute;left:903px;top:305.86px;width:24px;height:16.5px;background:#00c0ef;border-radius:2px;"></div>
<div style="position:absolute;left:907.50px;top:309.96px;font-size:8.5px;font-weight:400;line-height:8.5px;color:#fff;white-space:nowrap;transform:scaleX(1.0235);transform-origin:0 0;-webkit-text-stroke:0.15px #fff;">Edit</div>
<div style="position:absolute;left:928.9px;top:305.86px;width:33px;height:16.5px;background:#dd4b39;border-radius:2px;"></div>
<div style="position:absolute;left:934.00px;top:309.96px;font-size:8.5px;font-weight:400;line-height:8.5px;color:#fff;white-space:nowrap;transform:scaleX(0.9480);transform-origin:0 0;-webkit-text-stroke:0.15px #fff;">Delete</div>
<div style="position:absolute;left:195.50px;top:334.72px;font-size:10px;font-weight:400;line-height:10px;color:#333;white-space:nowrap;transform:scaleX(0.9189);transform-origin:0 0;">AMOXICILIN CLAVULLIN 228[ claxy]</div>
<div style="position:absolute;left:443.5px;top:332.32px;width:13.5px;height:14.6px;background:#f39c12;border-radius:2px;"></div>
<div style="position:absolute;left:448.16px;top:335.52px;font-size:7.5px;font-weight:700;line-height:7.5px;color:#fff;white-space:nowrap;">2</div>
<div style="position:absolute;left:511.20px;top:334.72px;font-size:10px;font-weight:400;line-height:10px;color:#333;white-space:nowrap;transform:scaleX(0.9550);transform-origin:0 0;">180.00</div>
<div style="position:absolute;left:610.00px;top:334.72px;font-size:10px;font-weight:400;line-height:10px;color:#333;white-space:nowrap;transform:scaleX(0.9550);transform-origin:0 0;">360.00</div>
<div style="position:absolute;left:683.80px;top:334.72px;font-size:10px;font-weight:400;line-height:10px;color:#333;white-space:nowrap;transform:scaleX(0.9550);transform-origin:0 0;">350</div>
<div style="position:absolute;left:814.00px;top:334.72px;font-size:10px;font-weight:400;line-height:10px;color:#333;white-space:nowrap;transform:scaleX(0.9400);transform-origin:0 0;">May 13, 2026</div>
<div style="position:absolute;left:903px;top:331.32px;width:24px;height:16.5px;background:#00c0ef;border-radius:2px;"></div>
<div style="position:absolute;left:907.50px;top:335.42px;font-size:8.5px;font-weight:400;line-height:8.5px;color:#fff;white-space:nowrap;transform:scaleX(1.0235);transform-origin:0 0;-webkit-text-stroke:0.15px #fff;">Edit</div>
<div style="position:absolute;left:928.9px;top:331.32px;width:33px;height:16.5px;background:#dd4b39;border-radius:2px;"></div>
<div style="position:absolute;left:934.00px;top:335.42px;font-size:8.5px;font-weight:400;line-height:8.5px;color:#fff;white-space:nowrap;transform:scaleX(0.9480);transform-origin:0 0;-webkit-text-stroke:0.15px #fff;">Delete</div>
<div style="position:absolute;left:195.50px;top:360.18px;font-size:10px;font-weight:400;line-height:10px;color:#333;white-space:nowrap;transform:scaleX(0.9059);transform-origin:0 0;">AMOXICILIN CLAVULLIN 375 [ACINE T]</div>
<div style="position:absolute;left:443.5px;top:357.78000000000003px;width:13.5px;height:14.6px;background:#dd4b39;border-radius:2px;"></div>
<div style="position:absolute;left:448.16px;top:360.98px;font-size:7.5px;font-weight:700;line-height:7.5px;color:#fff;white-space:nowrap;">0</div>
<div style="position:absolute;left:511.20px;top:360.18px;font-size:10px;font-weight:400;line-height:10px;color:#333;white-space:nowrap;transform:scaleX(0.9550);transform-origin:0 0;">132.00</div>
<div style="position:absolute;left:610.00px;top:360.18px;font-size:10px;font-weight:400;line-height:10px;color:#333;white-space:nowrap;transform:scaleX(0.9550);transform-origin:0 0;">0.00</div>
<div style="position:absolute;left:683.80px;top:360.18px;font-size:10px;font-weight:400;line-height:10px;color:#333;white-space:nowrap;transform:scaleX(0.9550);transform-origin:0 0;">350</div>
<div style="position:absolute;left:814.00px;top:360.18px;font-size:10px;font-weight:400;line-height:10px;color:#333;white-space:nowrap;transform:scaleX(0.9400);transform-origin:0 0;">May 26, 2025</div>
<div style="position:absolute;left:903px;top:356.78000000000003px;width:24px;height:16.5px;background:#00c0ef;border-radius:2px;"></div>
<div style="position:absolute;left:907.50px;top:360.88px;font-size:8.5px;font-weight:400;line-height:8.5px;color:#fff;white-space:nowrap;transform:scaleX(1.0235);transform-origin:0 0;-webkit-text-stroke:0.15px #fff;">Edit</div>
<div style="position:absolute;left:928.9px;top:356.78000000000003px;width:33px;height:16.5px;background:#dd4b39;border-radius:2px;"></div>
<div style="position:absolute;left:934.00px;top:360.88px;font-size:8.5px;font-weight:400;line-height:8.5px;color:#fff;white-space:nowrap;transform:scaleX(0.9480);transform-origin:0 0;-webkit-text-stroke:0.15px #fff;">Delete</div>
<div style="position:absolute;left:195.50px;top:385.64px;font-size:10px;font-weight:400;line-height:10px;color:#333;white-space:nowrap;transform:scaleX(0.9059);transform-origin:0 0;">AMOXICILIN CLAVULLIN 625 [ACINE T]</div>
<div style="position:absolute;left:443.5px;top:383.24000000000007px;width:13.5px;height:14.6px;background:#f39c12;border-radius:2px;"></div>
<div style="position:absolute;left:448.16px;top:386.44px;font-size:7.5px;font-weight:700;line-height:7.5px;color:#fff;white-space:nowrap;">2</div>
<div style="position:absolute;left:511.20px;top:385.64px;font-size:10px;font-weight:400;line-height:10px;color:#333;white-space:nowrap;transform:scaleX(0.9550);transform-origin:0 0;">170.00</div>
<div style="position:absolute;left:610.00px;top:385.64px;font-size:10px;font-weight:400;line-height:10px;color:#333;white-space:nowrap;transform:scaleX(0.9550);transform-origin:0 0;">340.00</div>
<div style="position:absolute;left:683.80px;top:385.64px;font-size:10px;font-weight:400;line-height:10px;color:#333;white-space:nowrap;transform:scaleX(0.9550);transform-origin:0 0;">400</div>
<div style="position:absolute;left:814.00px;top:385.64px;font-size:10px;font-weight:400;line-height:10px;color:#333;white-space:nowrap;transform:scaleX(0.9400);transform-origin:0 0;">May 19, 2026</div>
<div style="position:absolute;left:903px;top:382.24000000000007px;width:24px;height:16.5px;background:#00c0ef;border-radius:2px;"></div>
<div style="position:absolute;left:907.50px;top:386.34px;font-size:8.5px;font-weight:400;line-height:8.5px;color:#fff;white-space:nowrap;transform:scaleX(1.0235);transform-origin:0 0;-webkit-text-stroke:0.15px #fff;">Edit</div>
<div style="position:absolute;left:928.9px;top:382.24000000000007px;width:33px;height:16.5px;background:#dd4b39;border-radius:2px;"></div>
<div style="position:absolute;left:934.00px;top:386.34px;font-size:8.5px;font-weight:400;line-height:8.5px;color:#fff;white-space:nowrap;transform:scaleX(0.9480);transform-origin:0 0;-webkit-text-stroke:0.15px #fff;">Delete</div>
<div style="position:absolute;left:195.50px;top:411.10px;font-size:10px;font-weight:400;line-height:10px;color:#333;white-space:nowrap;transform:scaleX(0.9761);transform-origin:0 0;">ampiclox 500 m g</div>
<div style="position:absolute;left:443.60px;top:411.10px;font-size:10px;font-weight:400;line-height:10px;color:#333;white-space:nowrap;transform:scaleX(0.9500);transform-origin:0 0;">90</div>
<div style="position:absolute;left:511.20px;top:411.10px;font-size:10px;font-weight:400;line-height:10px;color:#333;white-space:nowrap;transform:scaleX(0.9550);transform-origin:0 0;">3.00</div>
<div style="position:absolute;left:610.00px;top:411.10px;font-size:10px;font-weight:400;line-height:10px;color:#333;white-space:nowrap;transform:scaleX(0.9550);transform-origin:0 0;">270.00</div>
<div style="position:absolute;left:683.80px;top:411.10px;font-size:10px;font-weight:400;line-height:10px;color:#333;white-space:nowrap;transform:scaleX(0.9550);transform-origin:0 0;">10</div>
<div style="position:absolute;left:814.00px;top:411.10px;font-size:10px;font-weight:400;line-height:10px;color:#333;white-space:nowrap;transform:scaleX(0.9400);transform-origin:0 0;">May 27, 2025</div>
<div style="position:absolute;left:903px;top:407.70000000000005px;width:24px;height:16.5px;background:#00c0ef;border-radius:2px;"></div>
<div style="position:absolute;left:907.50px;top:411.80px;font-size:8.5px;font-weight:400;line-height:8.5px;color:#fff;white-space:nowrap;transform:scaleX(1.0235);transform-origin:0 0;-webkit-text-stroke:0.15px #fff;">Edit</div>
<div style="position:absolute;left:928.9px;top:407.70000000000005px;width:33px;height:16.5px;background:#dd4b39;border-radius:2px;"></div>
<div style="position:absolute;left:934.00px;top:411.80px;font-size:8.5px;font-weight:400;line-height:8.5px;color:#fff;white-space:nowrap;transform:scaleX(0.9480);transform-origin:0 0;-webkit-text-stroke:0.15px #fff;">Delete</div>
<div style="position:absolute;left:195.50px;top:436.56px;font-size:10px;font-weight:400;line-height:10px;color:#333;white-space:nowrap;transform:scaleX(0.9801);transform-origin:0 0;">benased mixi cream</div>
<div style="position:absolute;left:443.5px;top:434.16px;width:13.5px;height:14.6px;background:#f39c12;border-radius:2px;"></div>
<div style="position:absolute;left:448.16px;top:437.36px;font-size:7.5px;font-weight:700;line-height:7.5px;color:#fff;white-space:nowrap;">2</div>
<div style="position:absolute;left:511.20px;top:436.56px;font-size:10px;font-weight:400;line-height:10px;color:#333;white-space:nowrap;transform:scaleX(0.9550);transform-origin:0 0;">32.00</div>
<div style="position:absolute;left:610.00px;top:436.56px;font-size:10px;font-weight:400;line-height:10px;color:#333;white-space:nowrap;transform:scaleX(0.9550);transform-origin:0 0;">64.00</div>
<div style="position:absolute;left:683.80px;top:436.56px;font-size:10px;font-weight:400;line-height:10px;color:#333;white-space:nowrap;transform:scaleX(0.9550);transform-origin:0 0;">100</div>
<div style="position:absolute;left:814.00px;top:436.56px;font-size:10px;font-weight:400;line-height:10px;color:#333;white-space:nowrap;transform:scaleX(0.9400);transform-origin:0 0;">May 27, 2026</div>
<div style="position:absolute;left:903px;top:433.16px;width:24px;height:16.5px;background:#00c0ef;border-radius:2px;"></div>
<div style="position:absolute;left:907.50px;top:437.26px;font-size:8.5px;font-weight:400;line-height:8.5px;color:#fff;white-space:nowrap;transform:scaleX(1.0235);transform-origin:0 0;-webkit-text-stroke:0.15px #fff;">Edit</div>
<div style="position:absolute;left:928.9px;top:433.16px;width:33px;height:16.5px;background:#dd4b39;border-radius:2px;"></div>
<div style="position:absolute;left:934.00px;top:437.26px;font-size:8.5px;font-weight:400;line-height:8.5px;color:#fff;white-space:nowrap;transform:scaleX(0.9480);transform-origin:0 0;-webkit-text-stroke:0.15px #fff;">Delete</div>
<div style="position:absolute;left:195.50px;top:462.02px;font-size:10px;font-weight:400;line-height:10px;color:#333;white-space:nowrap;transform:scaleX(0.9930);transform-origin:0 0;">betamed cream</div>
<div style="position:absolute;left:443.5px;top:459.62px;width:13.5px;height:14.6px;background:#f39c12;border-radius:2px;"></div>
<div style="position:absolute;left:448.16px;top:462.82px;font-size:7.5px;font-weight:700;line-height:7.5px;color:#fff;white-space:nowrap;">2</div>
<div style="position:absolute;left:511.20px;top:462.02px;font-size:10px;font-weight:400;line-height:10px;color:#333;white-space:nowrap;transform:scaleX(0.9550);transform-origin:0 0;">42.00</div>
<div style="position:absolute;left:610.00px;top:462.02px;font-size:10px;font-weight:400;line-height:10px;color:#333;white-space:nowrap;transform:scaleX(0.9550);transform-origin:0 0;">84.00</div>
<div style="position:absolute;left:683.80px;top:462.02px;font-size:10px;font-weight:400;line-height:10px;color:#333;white-space:nowrap;transform:scaleX(0.9550);transform-origin:0 0;">100</div>
<div style="position:absolute;left:814.00px;top:462.02px;font-size:10px;font-weight:400;line-height:10px;color:#333;white-space:nowrap;transform:scaleX(0.9400);transform-origin:0 0;">May 28, 2026</div>
<div style="position:absolute;left:903px;top:458.62px;width:24px;height:16.5px;background:#00c0ef;border-radius:2px;"></div>
<div style="position:absolute;left:907.50px;top:462.72px;font-size:8.5px;font-weight:400;line-height:8.5px;color:#fff;white-space:nowrap;transform:scaleX(1.0235);transform-origin:0 0;-webkit-text-stroke:0.15px #fff;">Edit</div>
<div style="position:absolute;left:928.9px;top:458.62px;width:33px;height:16.5px;background:#dd4b39;border-radius:2px;"></div>
<div style="position:absolute;left:934.00px;top:462.72px;font-size:8.5px;font-weight:400;line-height:8.5px;color:#fff;white-space:nowrap;transform:scaleX(0.9480);transform-origin:0 0;-webkit-text-stroke:0.15px #fff;">Delete</div>
</body></html>
